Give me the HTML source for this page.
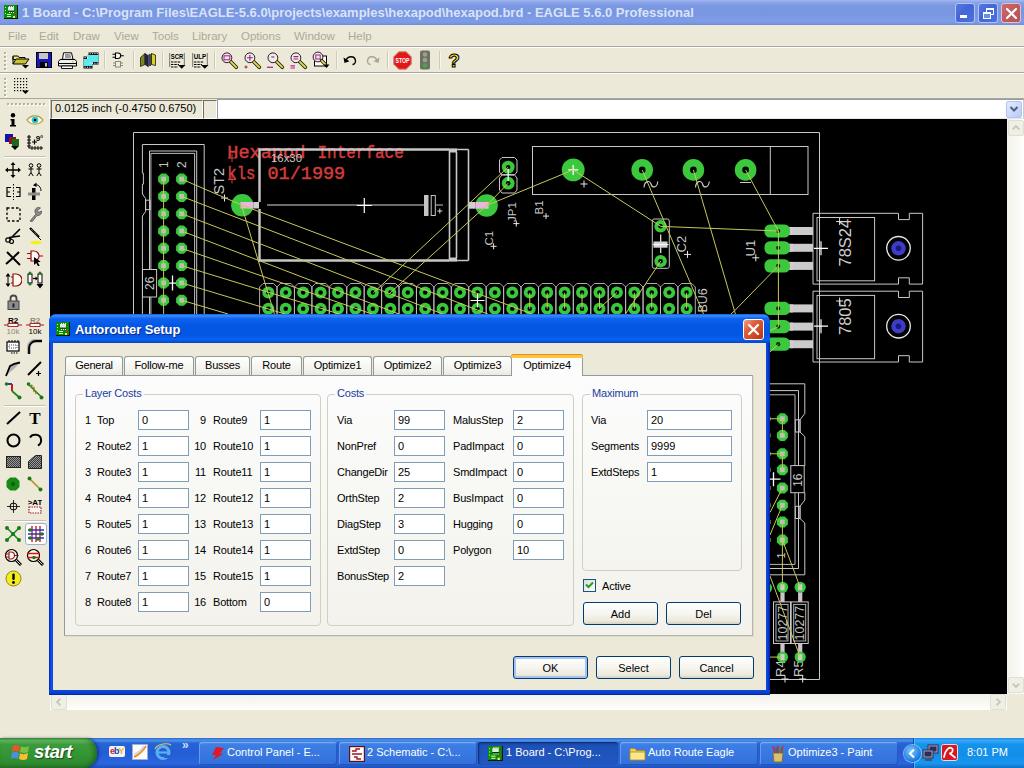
<!DOCTYPE html>
<html><head><meta charset="utf-8">
<style>
*{box-sizing:border-box;margin:0;padding:0}
html,body{width:1024px;height:768px;overflow:hidden;background:#ece9d8;font-family:"Liberation Sans",sans-serif;font-size:11px;color:#000}
.abs{position:absolute}
#titlebar{position:absolute;left:0;top:0;width:1024px;height:25px;background:linear-gradient(#a3b8f0 0,#8aa4e8 10%,#7b98e2 22%,#7896e1 55%,#7f9de7 82%,#7a98e4 92%,#6d8cda 100%)}
#titlebar .t{position:absolute;left:22px;top:5px;font-weight:bold;font-size:13px;color:#d9e3f8;white-space:nowrap;letter-spacing:0}
#menubar{position:absolute;left:0;top:25px;width:1024px;height:21px;background:#ece9d8}
#menubar span{position:absolute;top:5px;color:#aca899;font-size:11.5px}
.hline{position:absolute;left:0;width:1024px;height:1px}
#canvas{position:absolute;left:50px;top:119px;width:957px;height:575px;background:#000;overflow:hidden}
#taskbar{position:absolute;left:0;top:738px;width:1024px;height:30px;background:linear-gradient(#3168d5 0,#4993e6 8%,#2663d6 18%,#245dd7 50%,#2a66dd 85%,#1d4fba 100%)}

#dlg{position:absolute;left:49px;top:314px;width:721px;height:381px;background:linear-gradient(90deg,#001aa8 0,#0a3ed8 1px,#1052ec 2.500px,#0c4ae2 4px,#0c4ae2 717px,#0a3fd0 719px,#001aa0 721px);border-radius:7px 7px 0 0;overflow:hidden}
#dlgtitle{position:absolute;left:0;top:0;width:721px;height:29px;background:linear-gradient(#0a5fe8 0,#3a8cf7 6%,#0e62ee 16%,#0457e4 40%,#0356e3 70%,#0a60f0 88%,#0447c8 100%);border-radius:7px 7px 0 0}
#dlgtitle .t{position:absolute;left:26px;top:8px;font-weight:bold;font-size:13px;letter-spacing:-0.1px;color:#fff;white-space:nowrap;text-shadow:1px 1px 0 #0a2a8a}
#dlgbody{position:absolute;left:4px;top:29px;width:713px;height:347px;background:#ece9d8}#dlgbot{position:absolute;left:0;top:376px;width:721px;height:5px;background:linear-gradient(#0b4ad8 0,#0a3fd0 3px,#00229c 5px)}
#pane{position:absolute;left:64px;top:375px;width:689px;height:261px;background:linear-gradient(#fcfcfd 0,#f8f8f5 40%,#f3f2ec 100%);border:1px solid;border-color:#919b9c #b4b6aa #b4b6aa #919b9c;box-shadow:1px 1px 0 #dcdace}
.tab{position:absolute;top:356px;height:19px;background:linear-gradient(#fefefd 0,#f6f5f0 60%,#ebeae1 100%);border:1px solid #919b9c;border-bottom:none;border-radius:3px 3px 0 0;text-align:center;font-size:11px;line-height:17px;white-space:nowrap;letter-spacing:-0.2px}
.tab.sel{top:354px;height:22px;background:#fcfcfd;border-top:none;line-height:23px}
.tab.sel:before{content:"";position:absolute;left:-1px;right:-1px;top:0;height:3px;background:#ffc73c;border-top:1px solid #e68b2c;border-radius:3px 3px 0 0}
.grp{position:absolute;border:1px solid #d0d0bf;border-radius:4px}
.grp b{position:absolute;left:7px;top:-8px;background:#fbfbfb;padding:0 2px;font-weight:normal;color:#1a409c;font-size:11px;line-height:13px;white-space:nowrap;letter-spacing:-0.2px}
.in{position:absolute;height:20px;background:#fff;border:1px solid #7f9db9;font-size:11px;line-height:18px;padding-left:3px}
.lb{position:absolute;font-size:11px;line-height:13px;white-space:nowrap;letter-spacing:-0.2px}
.btn{position:absolute;width:75px;height:23px;border:1px solid #003c74;border-radius:3px;background:linear-gradient(#fff 0,#f6f5ef 50%,#ece9dd 85%,#d6d0c5 100%);text-align:center;font-size:11px;line-height:23px}
.btn.def{box-shadow:inset 0 0 0 2px #a9c3f1}.cb{position:absolute;top:3px;width:20px;height:20px;border:1px solid #b4c4f2;border-radius:3px;background:linear-gradient(135deg,#5878e0 0,#4266d8 45%,#4a72e0 100%)}
.cb.x{background:linear-gradient(135deg,#cc6a70 0,#c25a5e 45%,#b85454 100%);border-color:#e0c0d0}

#dlgclose{position:absolute;left:694px;top:5px;width:21px;height:21px;border:1px solid #fff;border-radius:3px;background:linear-gradient(135deg,#f0a088 0,#e0603c 35%,#c8401c 80%,#b83818 100%)}

</style></head><body>
<div id="titlebar"><svg class="abs" style="left:4px;top:5px" width="14" height="14" viewBox="0 0 14 14"><rect x="0" y="0" width="14" height="14" fill="#031a03"/><rect x="0" y="0" width="13" height="13" fill="#0c8c0c"/><rect x="4" y="2" width="6" height="4" fill="#e4e8e0"/><rect x="4" y="5.600" width="6.500" height="0.900" fill="#052805"/><rect x="5" y="1" width="1" height="1" fill="#d8ffd8"/><rect x="7" y="1" width="1" height="1" fill="#d8ffd8"/><rect x="9" y="1" width="1" height="1" fill="#d8ffd8"/><rect x="5" y="7" width="1" height="1" fill="#d8ffd8"/><rect x="7" y="7" width="1" height="1" fill="#d8ffd8"/><rect x="9" y="7" width="1" height="1" fill="#d8ffd8"/><rect x="1" y="2" width="1" height="1" fill="#b8ffb8"/><rect x="1" y="5" width="1" height="1" fill="#b8ffb8"/><rect x="1" y="8" width="1" height="1" fill="#b8ffb8"/><rect x="3" y="9" width="4" height="1" fill="#c8ff9c"/><rect x="3" y="11" width="4" height="1" fill="#c8ff9c"/><circle cx="11" cy="9" r="1" fill="#d02818"/><rect x="9" y="11" width="2" height="2" fill="#f0f078"/></svg><div class="t">1 Board - C:\Program Files\EAGLE-5.6.0\projects\examples\hexapod\hexapod.brd - EAGLE 5.6.0 Professional</div>
<div class="cb" style="left:955px"><div style="position:absolute;left:4px;top:11px;width:7px;height:3px;background:#fff"></div></div>
<div class="cb" style="left:978px"><svg width="19" height="19" viewBox="0 0 19 19" style="position:absolute;left:0;top:0"><rect x="7.5" y="4.5" width="7" height="6" fill="none" stroke="#fff" stroke-width="1"/><rect x="7" y="4" width="8" height="2" fill="#fff"/><rect x="4.5" y="8.5" width="7" height="6" fill="#6c8fe0" stroke="#fff" stroke-width="1"/><rect x="4" y="8" width="8" height="2" fill="#fff"/></svg></div>
<div class="cb x" style="left:1001px"><svg width="19" height="19" viewBox="0 0 19 19" style="position:absolute;left:0;top:0"><path d="M5 5 L14 14 M14 5 L5 14" stroke="#fff" stroke-width="2.2" stroke-linecap="round"/></svg></div>
</div>
<div id="menubar">
<span style="left:8px">File</span>
<span style="left:39px">Edit</span>
<span style="left:73px">Draw</span>
<span style="left:114px">View</span>
<span style="left:152px">Tools</span>
<span style="left:192px">Library</span>
<span style="left:241px">Options</span>
<span style="left:294px">Window</span>
<span style="left:348px">Help</span>
</div>
<div class="hline" style="top:46px;background:#aca899"></div>
<div class="hline" style="top:47px;background:#fff"></div>
<div class="hline" style="top:72px;background:#aca899"></div>
<div class="hline" style="top:73px;background:#fff"></div>
<div class="hline" style="top:98px;background:#aca899"></div>
<div class="abs" style="left:4px;top:52px;width:2px;height:2px;background:#b5b2a0;box-shadow:1px 1px 0 #fff"></div><div class="abs" style="left:4px;top:56px;width:2px;height:2px;background:#b5b2a0;box-shadow:1px 1px 0 #fff"></div><div class="abs" style="left:4px;top:60px;width:2px;height:2px;background:#b5b2a0;box-shadow:1px 1px 0 #fff"></div><div class="abs" style="left:4px;top:64px;width:2px;height:2px;background:#b5b2a0;box-shadow:1px 1px 0 #fff"></div><div class="abs" style="left:4px;top:68px;width:2px;height:2px;background:#b5b2a0;box-shadow:1px 1px 0 #fff"></div>
<div class="abs" style="left:4px;top:78px;width:2px;height:2px;background:#b5b2a0;box-shadow:1px 1px 0 #fff"></div><div class="abs" style="left:4px;top:82px;width:2px;height:2px;background:#b5b2a0;box-shadow:1px 1px 0 #fff"></div><div class="abs" style="left:4px;top:86px;width:2px;height:2px;background:#b5b2a0;box-shadow:1px 1px 0 #fff"></div><div class="abs" style="left:4px;top:90px;width:2px;height:2px;background:#b5b2a0;box-shadow:1px 1px 0 #fff"></div><div class="abs" style="left:4px;top:94px;width:2px;height:2px;background:#b5b2a0;box-shadow:1px 1px 0 #fff"></div>
<div class="abs" style="left:104px;top:51px;width:1px;height:18px;background:#cdcaba;box-shadow:1px 0 0 #f8f7f0"></div>
<div class="abs" style="left:133px;top:51px;width:1px;height:18px;background:#cdcaba;box-shadow:1px 0 0 #f8f7f0"></div>
<div class="abs" style="left:162px;top:51px;width:1px;height:18px;background:#cdcaba;box-shadow:1px 0 0 #f8f7f0"></div>
<div class="abs" style="left:214px;top:51px;width:1px;height:18px;background:#cdcaba;box-shadow:1px 0 0 #f8f7f0"></div>
<div class="abs" style="left:336px;top:51px;width:1px;height:18px;background:#cdcaba;box-shadow:1px 0 0 #f8f7f0"></div>
<div class="abs" style="left:387px;top:51px;width:1px;height:18px;background:#cdcaba;box-shadow:1px 0 0 #f8f7f0"></div>
<div class="abs" style="left:439px;top:51px;width:1px;height:18px;background:#cdcaba;box-shadow:1px 0 0 #f8f7f0"></div>
<svg class="abs" style="left:12px;top:51px" width="18" height="18" viewBox="0 0 18 18"><path d="M1 5 h5 l1 1.5 h6 v2 h-12z" fill="#f5e46a" stroke="#000" stroke-width="1"/><path d="M1 13 l3 -5 h13 l-3.5 5z" fill="#c9c235" stroke="#000" stroke-width="1"/><path d="M1 5.5 v7.5" stroke="#000"/><path d="M10 14 h7 l-3.5 3.5z" fill="#000"/></svg>
<svg class="abs" style="left:35.5px;top:52px" width="16" height="16" viewBox="0 0 16 16"><rect x="0.5" y="0.5" width="15" height="15" fill="#1818b8" stroke="#000"/><rect x="3" y="1" width="9" height="6" fill="#c6c6c6"/><rect x="4" y="10" width="8" height="5.5" fill="#000"/><rect x="9" y="11" width="2" height="3.5" fill="#c6c6c6"/></svg>
<svg class="abs" style="left:57.5px;top:51.5px" width="19" height="17" viewBox="0 0 19 17"><path d="M5.500 0.800 h8 l1.500 6.500 h-10.500z" fill="#ffffff" stroke="#000" stroke-width="1"/><path d="M7 3 h5.500 M7 5 h6" stroke="#000" stroke-width="0.800"/><path d="M2 7.500 h15 l1.500 2 v4.500 h-18 v-4.500z" fill="#f0f0f0" stroke="#000"/><path d="M1 11.500 h17" stroke="#000"/><path d="M3.500 14 h11 v2.500 h-11z" fill="#fff" stroke="#000" stroke-width="0.900"/><rect x="14" y="9" width="2" height="1.200" fill="#e0d020"/></svg>
<svg class="abs" style="left:82.5px;top:51.5px" width="16" height="17" viewBox="0 0 16 17"><rect x="5.500" y="0.500" width="10" height="12" fill="#000"/><rect x="5.500" y="3" width="10" height="7" fill="#5ce8ec"/><rect x="0.500" y="4.500" width="9" height="12" fill="#000"/><rect x="0.500" y="7" width="9" height="7" fill="#5ce8ec"/><rect x="4" y="3" width="6" height="9" fill="#5ce8ec"/><path d="M6.500 1.700 h8.500 M6.500 11.200 h8.500 M1.500 5.700 h3.500 M1.500 15.200 h7.500" stroke="#fff" stroke-width="1" stroke-dasharray="1.200 1.200"/></svg>
<svg class="abs" style="left:112px;top:51.5px" width="12" height="16" viewBox="0 0 12 16"><path d="M3.500 1 v5.500 h2.500 a2.750 2.750 0 0 0 0 -5.500z" fill="#f8f8f0" stroke="#000" stroke-width="1.100"/><path d="M0.500 2.300 h3 M0.500 5.200 h3 M8.800 3.750 h3" stroke="#000" stroke-width="1.100"/><rect x="3.500" y="9.500" width="5" height="5.500" fill="#eeece0" stroke="#8a887c" stroke-width="1"/><path d="M1 11 h2.500 M1 13.500 h2.500 M8.500 11 h2.500 M8.500 13.500 h2.500" stroke="#8a887c" stroke-width="1"/></svg>
<svg class="abs" style="left:140px;top:51.5px" width="16" height="15" viewBox="0 0 16 15"><path d="M0.500 5.500 L5 1.500 V12.500 L0.500 14.500z" fill="#84841c" stroke="#1a1a1a" stroke-width="0.800"/><path d="M5 1.500 L8 3.500 V14.500 L5 12.500z" fill="#26264a" stroke="#1a1a1a" stroke-width="0.600"/><path d="M8 3.500 L10 2 V13 L8 14.500z" fill="#6464b8" stroke="#1a1a1a" stroke-width="0.600"/><path d="M10 3.500 L11.500 1.500 V12.500 L10 14z" fill="#6c6c10" stroke="#1a1a1a" stroke-width="0.600"/><path d="M11.500 1.500 L15.500 3 V13.500 L11.500 12.500z" fill="#d8d224" stroke="#1a1a1a" stroke-width="0.800"/></svg>
<svg class="abs" style="left:168.5px;top:52.5px" width="17" height="16" viewBox="0 0 17 16"><path d="M0.700 0.500 v14 M15.300 0.500 v11" stroke="#000" stroke-width="1" stroke-dasharray="1 1"/><text x="8" y="6.300" font-size="8" font-weight="bold" text-anchor="middle" font-family="Liberation Sans" fill="#000" textLength="12.500" lengthAdjust="spacingAndGlyphs">SCR</text><path d="M2 9 h10 M2 11.500 h8 M2 14 h7" stroke="#000" stroke-width="1.100" stroke-dasharray="2.500 0.800"/><path d="M9 12 h7.500 l-3.750 3.800z" fill="#000"/></svg>
<svg class="abs" style="left:191.5px;top:52.5px" width="17" height="16" viewBox="0 0 17 16"><path d="M0.700 0.500 v14 M15.300 0.500 v11" stroke="#000" stroke-width="1" stroke-dasharray="1 1"/><text x="8" y="6.300" font-size="8" font-weight="bold" text-anchor="middle" font-family="Liberation Sans" fill="#000" textLength="12.500" lengthAdjust="spacingAndGlyphs">ULP</text><path d="M2 9 h10 M2 11.500 h8 M2 14 h7" stroke="#000" stroke-width="1.100" stroke-dasharray="2.500 0.800"/><path d="M9 12 h7.500 l-3.750 3.800z" fill="#000"/></svg>
<svg class="abs" style="left:219.5px;top:51.5px" width="19" height="19" viewBox="0 0 19 19"><path d="M10.300 9.300 L16.300 15.300" stroke="#2a2410" stroke-width="3.600" stroke-linecap="round"/><path d="M10.600 9.600 L16.200 15.200" stroke="#e2de50" stroke-width="1.900" stroke-linecap="round"/><circle cx="6.900" cy="5.800" r="4.900" fill="#f2eee2" stroke="#2a1830" stroke-width="1"/><rect x="4" y="3.800" width="5.800" height="4" fill="#f4e4ec" stroke="#a01c84" stroke-width="1"/></svg>
<svg class="abs" style="left:242.5px;top:51.5px" width="19" height="19" viewBox="0 0 19 19"><path d="M10.300 9.300 L16.300 15.300" stroke="#2a2410" stroke-width="3.600" stroke-linecap="round"/><path d="M10.600 9.600 L16.200 15.200" stroke="#e2de50" stroke-width="1.900" stroke-linecap="round"/><circle cx="6.900" cy="5.800" r="4.900" fill="#f2eee2" stroke="#2a1830" stroke-width="1"/><path d="M4 5.800 h5.800 M6.900 2.900 v5.800" stroke="#a01c84" stroke-width="1.100"/><path d="M1.500 15 h3 M3 13.500 v3" stroke="#a01c44" stroke-width="1"/></svg>
<svg class="abs" style="left:265.5px;top:51.5px" width="19" height="19" viewBox="0 0 19 19"><path d="M10.300 9.300 L16.300 15.300" stroke="#2a2410" stroke-width="3.600" stroke-linecap="round"/><path d="M10.600 9.600 L16.200 15.200" stroke="#e2de50" stroke-width="1.900" stroke-linecap="round"/><circle cx="6.900" cy="5.800" r="4.900" fill="#f2eee2" stroke="#2a1830" stroke-width="1"/><path d="M5.300 5 h3" stroke="#a01c84" stroke-width="1.100"/><path d="M1 15.300 h6" stroke="#c01c94" stroke-width="1.300"/></svg>
<svg class="abs" style="left:288.5px;top:51.5px" width="19" height="19" viewBox="0 0 19 19"><path d="M10.300 9.300 L16.300 15.300" stroke="#2a2410" stroke-width="3.600" stroke-linecap="round"/><path d="M10.600 9.600 L16.200 15.200" stroke="#e2de50" stroke-width="1.900" stroke-linecap="round"/><circle cx="6.900" cy="5.800" r="4.900" fill="#f2eee2" stroke="#2a1830" stroke-width="1"/><path d="M4.500 4.600 h4.800 M4.500 7 h4.800" stroke="#a01c84" stroke-width="1.100"/><path d="M1.500 13.800 h4.500 M1.500 16 h4.500" stroke="#c01c94" stroke-width="1.200"/></svg>
<svg class="abs" style="left:312px;top:51px" width="18" height="18" viewBox="0 0 18 18"><rect x="2.500" y="5" width="12" height="10" fill="#fff" stroke="#000" stroke-width="1"/><circle cx="6" cy="6" r="4.900" fill="#f2eee2" stroke="#2a1830" stroke-width="1"/><rect x="3.800" y="4" width="4.400" height="4" fill="#f4e4ec" stroke="#a01c84" stroke-width="1"/><path d="M9.500 9.500 L13.500 13.500" stroke="#2a2410" stroke-width="3.400" stroke-linecap="round"/><path d="M9.800 9.800 L13.300 13.300" stroke="#e2de50" stroke-width="1.700" stroke-linecap="round"/><path d="M11.500 13.500 h6 l-3 3.500z" fill="#000"/></svg>
<svg class="abs" style="left:342px;top:54px" width="16" height="12" viewBox="0 0 16 12"><path d="M4 6.500 C 6 1.500, 13 1.500, 13.500 7 C 13.500 9, 12 10.500, 10.500 10.500" fill="none" stroke="#000" stroke-width="1.400"/><path d="M1.500 3.500 l1 5.500 l5 -1.800z" fill="#000"/></svg>
<svg class="abs" style="left:365px;top:54px" width="16" height="12" viewBox="0 0 16 12"><path d="M12 6.500 C 10 1.500, 3 1.500, 2.500 7 C 2.500 9, 4 10.500, 5.500 10.500" fill="none" stroke="#a8a698" stroke-width="1.400"/><path d="M14.500 3.500 l-1 5.500 l-5 -1.800z" fill="#a8a698"/></svg>
<svg class="abs" style="left:392.5px;top:50.5px" width="19" height="19" viewBox="0 0 19 19"><path d="M5.800 0.700 h7.400 l5.100 5.100 v7.400 l-5.100 5.100 h-7.400 l-5.100 -5.100 v-7.400z" fill="#e01818" stroke="#fff" stroke-width="0.800"/><path d="M5.800 0.700 h7.400 l5.100 5.100 v7.400 l-5.100 5.100 h-7.400 l-5.100 -5.100 v-7.400z" fill="none" stroke="#a01010" stroke-width="0.500"/><text x="9.500" y="12.300" font-size="7.500" font-weight="bold" text-anchor="middle" font-family="Liberation Sans" fill="#fff" textLength="14" lengthAdjust="spacingAndGlyphs">STOP</text></svg>
<svg class="abs" style="left:419px;top:50px" width="12" height="20" viewBox="0 0 12 20"><rect x="1" y="0.500" width="10" height="19" rx="2" fill="#5a5a52"/><circle cx="6" cy="4.500" r="2.300" fill="#8a9a84"/><circle cx="6" cy="10" r="2.300" fill="#8a9a84"/><circle cx="6" cy="15.500" r="2.300" fill="#2e9a38"/><path d="M1 1 h10 M1 3 h10 M1 5 h10 M1 7 h10 M1 9 h10 M1 11 h10 M1 13 h10 M1 15 h10 M1 17 h10 M1 19 h10" stroke="#cfd4c4" stroke-width="0.600" opacity="0.600"/></svg>
<svg class="abs" style="left:447px;top:51px" width="14" height="18" viewBox="0 0 14 18"><text x="7" y="15.500" font-size="19" font-weight="bold" text-anchor="middle" font-family="Liberation Sans" fill="#f4ec1c" stroke="#000" stroke-width="1">?</text></svg>
<svg class="abs" style="left:13.5px;top:78px" width="18" height="18" viewBox="0 0 18 18"><rect x="0" y="0" width="1.2" height="1.2" fill="#000"/><rect x="3" y="0" width="1.2" height="1.2" fill="#000"/><rect x="6" y="0" width="1.2" height="1.2" fill="#000"/><rect x="9" y="0" width="1.2" height="1.2" fill="#000"/><rect x="12" y="0" width="1.2" height="1.2" fill="#000"/><rect x="0" y="3" width="1.2" height="1.2" fill="#000"/><rect x="3" y="3" width="1.2" height="1.2" fill="#000"/><rect x="6" y="3" width="1.2" height="1.2" fill="#000"/><rect x="9" y="3" width="1.2" height="1.2" fill="#000"/><rect x="12" y="3" width="1.2" height="1.2" fill="#000"/><rect x="0" y="6" width="1.2" height="1.2" fill="#000"/><rect x="3" y="6" width="1.2" height="1.2" fill="#000"/><rect x="6" y="6" width="1.2" height="1.2" fill="#000"/><rect x="9" y="6" width="1.2" height="1.2" fill="#000"/><rect x="12" y="6" width="1.2" height="1.2" fill="#000"/><rect x="0" y="9" width="1.2" height="1.2" fill="#000"/><rect x="3" y="9" width="1.2" height="1.2" fill="#000"/><rect x="6" y="9" width="1.2" height="1.2" fill="#000"/><rect x="9" y="9" width="1.2" height="1.2" fill="#000"/><rect x="12" y="9" width="1.2" height="1.2" fill="#000"/><rect x="0" y="12" width="1.2" height="1.2" fill="#000"/><rect x="3" y="12" width="1.2" height="1.2" fill="#000"/><rect x="6" y="12" width="1.2" height="1.2" fill="#000"/><rect x="9" y="12" width="1.2" height="1.2" fill="#000"/><rect x="12" y="12" width="1.2" height="1.2" fill="#000"/><path d="M8 12.500 h7 l-3.500 3.500z" fill="#000"/></svg><div class="abs" style="left:0;top:99px;width:50px;height:611px;background:#ece9d8"></div>
<div class="abs" style="left:49px;top:99px;width:1px;height:20px;background:#fff"></div><div class="abs" style="left:50px;top:99px;width:1px;height:20px;background:#c0bdac"></div>
<div class="abs" style="left:7px;top:103px;width:2px;height:2px;background:#b5b2a0;box-shadow:1px 1px 0 #fff"></div><div class="abs" style="left:11px;top:103px;width:2px;height:2px;background:#b5b2a0;box-shadow:1px 1px 0 #fff"></div><div class="abs" style="left:15px;top:103px;width:2px;height:2px;background:#b5b2a0;box-shadow:1px 1px 0 #fff"></div><div class="abs" style="left:19px;top:103px;width:2px;height:2px;background:#b5b2a0;box-shadow:1px 1px 0 #fff"></div><div class="abs" style="left:23px;top:103px;width:2px;height:2px;background:#b5b2a0;box-shadow:1px 1px 0 #fff"></div><div class="abs" style="left:27px;top:103px;width:2px;height:2px;background:#b5b2a0;box-shadow:1px 1px 0 #fff"></div><div class="abs" style="left:31px;top:103px;width:2px;height:2px;background:#b5b2a0;box-shadow:1px 1px 0 #fff"></div><div class="abs" style="left:35px;top:103px;width:2px;height:2px;background:#b5b2a0;box-shadow:1px 1px 0 #fff"></div><div class="abs" style="left:39px;top:103px;width:2px;height:2px;background:#b5b2a0;box-shadow:1px 1px 0 #fff"></div><div class="abs" style="left:43px;top:103px;width:2px;height:2px;background:#b5b2a0;box-shadow:1px 1px 0 #fff"></div>
<div class="abs" style="left:4px;top:156px;width:42px;height:1px;background:#c5c2b2;box-shadow:0 1px 0 #fff"></div>
<div class="abs" style="left:4px;top:405px;width:42px;height:1px;background:#c5c2b2;box-shadow:0 1px 0 #fff"></div>
<div class="abs" style="left:4px;top:520px;width:42px;height:1px;background:#c5c2b2;box-shadow:0 1px 0 #fff"></div>
<svg class="abs" style="left:9px;top:113px" width="8" height="14" viewBox="0 0 8 14"><circle cx="4" cy="2.200" r="2.200" fill="#000"/><path d="M1.500 6 h4 v6 h1.500 v1.500 h-6 v-1.500 h1.500 v-4.500 h-1z" fill="#000"/></svg>
<svg class="abs" style="left:26px;top:114px" width="18" height="12" viewBox="0 0 18 12"><path d="M1 6 C 5 0.500, 13 0.500, 17 6 C 13 11.500, 5 11.500, 1 6z" fill="#fdfcf0" stroke="#b09a30" stroke-width="1.200"/><circle cx="9" cy="6" r="3.300" fill="#28c8d8"/><circle cx="9" cy="6" r="1.300" fill="#000"/></svg>
<svg class="abs" style="left:5px;top:134px" width="16" height="16" viewBox="0 0 16 16"><rect x="0" y="0" width="8" height="8" fill="#1414a8"/><rect x="4" y="3" width="7" height="7" fill="#8a1a1a"/><rect x="7" y="5" width="7" height="7" fill="#1a6a1a"/><path d="M6 12 h8 l-4 4z" fill="#000"/></svg>
<svg class="abs" style="left:26.5px;top:134px" width="17" height="16" viewBox="0 0 17 16"><path d="M2 1 v13 h14" fill="none" stroke="#000" stroke-width="1.200"/><path d="M0 3 h4 M0 6 h4 M0 9 h4 M0 12 h4 M5 12 v4 M8 12 v4 M11 12 v4 M14 12 v4" stroke="#000" stroke-width="0.900"/><path d="M5 8 h5 M7.500 5.500 v5" stroke="#000" stroke-width="1.200"/><text x="12.500" y="7" font-size="8" font-weight="bold" font-family="Liberation Sans" text-anchor="middle">9°</text></svg>
<svg class="abs" style="left:5px;top:162px" width="16" height="16" viewBox="0 0 16 16"><path d="M8 1 v14 M1 8 h14" stroke="#000" stroke-width="1.300"/><path d="M8 0 l-2.500 3 h5z M8 16 l-2.500 -3 h5z M0 8 l3 -2.500 v5z M16 8 l-3 -2.500 v5z" fill="#000"/></svg>
<svg class="abs" style="left:27px;top:163px" width="16" height="14" viewBox="0 0 16 14"><circle cx="4" cy="2.500" r="1.800" fill="none" stroke="#000"/><path d="M4 4.500 v5 M1.5 6 h5 M4 9.500 l-2.200 3.500 M4 9.500 l2.200 3.500" stroke="#000" fill="none"/><circle cx="12" cy="2.500" r="1.800" fill="none" stroke="#000"/><path d="M12 4.500 v5 M9.5 6 h5 M12 9.500 l-2.200 3.500 M12 9.500 l2.200 3.500" stroke="#000" fill="none"/></svg>
<svg class="abs" style="left:5.5px;top:184px" width="15" height="16" viewBox="0 0 15 16"><path d="M7.500 0 v16" stroke="#000" stroke-dasharray="1.500 1.500"/><path d="M5 3.500 h-4 v9 h4 M1 8 h3" fill="none" stroke="#000" stroke-width="1.200"/><path d="M10 3.500 h4 v9 h-4 M14 8 h-3" fill="none" stroke="#000" stroke-width="1.200"/></svg>
<svg class="abs" style="left:27px;top:182px" width="16" height="18" viewBox="0 0 16 18"><rect x="5" y="6" width="3.500" height="12" fill="#000"/><rect x="1" y="10.500" width="12" height="3" fill="#8c8c8c"/><path d="M8 3 C 11 2, 14 5, 14 9" fill="none" stroke="#000" stroke-width="1"/><path d="M6 3.300 l3.500 -2.800 v4.500z" fill="#000"/></svg>
<svg class="abs" style="left:5.5px;top:206.5px" width="15" height="15" viewBox="0 0 15 15"><rect x="1" y="1" width="13" height="13" fill="none" stroke="#000" stroke-width="1.300" stroke-dasharray="2.500 2"/></svg>
<svg class="abs" style="left:28px;top:206px" width="14" height="16" viewBox="0 0 14 16"><path d="M2 15 L8 8 C 5 4, 9 0, 12.500 2 L9.500 4.500 L10.500 6.500 L13.500 5 C 14 8.500, 11 10, 9 9.500 L4 15.800z" fill="#8c8c8c" stroke="#444" stroke-width="0.700"/></svg>
<svg class="abs" style="left:5px;top:228px" width="16" height="16" viewBox="0 0 16 16"><path d="M15 1 L5 11 M15 8 L4 9.500" stroke="#000" stroke-width="1.600"/><circle cx="3" cy="12" r="2.200" fill="none" stroke="#000" stroke-width="1.200"/><circle cx="6.500" cy="13.500" r="2" fill="none" stroke="#000" stroke-width="1.200"/></svg>
<svg class="abs" style="left:28px;top:227px" width="14" height="18" viewBox="0 0 14 18"><path d="M2 1 L11 10" stroke="#000" stroke-width="2.200"/><path d="M3 2 L10 9" stroke="#b0b0b0" stroke-width="0.800" stroke-dasharray="1 1"/><path d="M10 10 l3 3" stroke="#000" stroke-width="1"/><ellipse cx="8" cy="15.500" rx="6" ry="1.800" fill="#f4f020"/></svg>
<svg class="abs" style="left:5px;top:250.5px" width="16" height="15" viewBox="0 0 16 15"><path d="M2 1 C 6 5, 10 9, 15 14 M14 1 C 10 5, 6 9, 1 13" stroke="#000" stroke-width="2" fill="none"/></svg>
<svg class="abs" style="left:27px;top:250px" width="16" height="16" viewBox="0 0 16 16"><path d="M4 1 v10 h3 a5 5 0 0 0 0 -10z" fill="#fdf8f0" stroke="#901010" stroke-width="1.200"/><path d="M0 3.500 h4 M0 8.500 h4 M12 6 h4" stroke="#901010" stroke-width="1.200"/><path d="M7 7 v8 l2.200 -2 l2 3.500 l1.500 -0.800 l-2 -3.500 l3 -0.500z" fill="#000"/></svg>
<svg class="abs" style="left:4.5px;top:273px" width="17" height="14" viewBox="0 0 17 14"><path d="M3 1 v12" stroke="#000" stroke-width="1"/><path d="M3 0 l-2.500 3.500 h5z M3 14 l-2.500 -3.500 h5z" fill="#000"/><path d="M8 1 v12 h3 a6 6 0 0 0 0 -12z" fill="#fdf8f0" stroke="#901010" stroke-width="1.200"/><path d="M6 4 h2 M6 10 h2" stroke="#901010"/></svg>
<svg class="abs" style="left:27px;top:271px" width="16" height="18" viewBox="0 0 16 18"><rect x="1" y="3" width="4" height="9" fill="#fff" stroke="#000"/><circle cx="3" cy="2" r="1.500" fill="#1a7a1a"/><circle cx="3" cy="13" r="1.500" fill="#1a7a1a"/><path d="M6 7.500 h3.500" stroke="#000" stroke-width="1.200"/><path d="M8.500 5.500 l2.500 2 l-2.500 2z" fill="#000"/><rect x="11" y="3" width="4" height="9" fill="#fff" stroke="#000"/><circle cx="13" cy="2" r="1.500" fill="#1a7a1a"/><path d="M9.500 13 h7 l-3.500 4.500z" fill="#000"/></svg>
<svg class="abs" style="left:6.5px;top:294px" width="13" height="16" viewBox="0 0 13 16"><path d="M3.500 8 v-3.500 a3 3 0 0 1 6 0 v3.500" fill="none" stroke="#444" stroke-width="1.800"/><rect x="1" y="7" width="11" height="8.500" fill="#8c8c8c" stroke="#444"/><rect x="5.500" y="9.500" width="2" height="4" fill="#222"/></svg>
<svg class="abs" style="left:4px;top:316px" width="18" height="18" viewBox="0 0 18 18"><text x="9" y="6.500" font-size="8" font-weight="bold" font-family="Liberation Sans" text-anchor="middle" fill="#000">R2</text><path d="M0 9 h18" stroke="#a01818" stroke-width="1"/><rect x="4" y="7.500" width="10" height="3" fill="#fdf4f0" stroke="#a01818" stroke-width="0.900"/><text x="9" y="17.500" font-size="8" font-family="Liberation Sans" text-anchor="middle" fill="#8a887c">10k</text></svg>
<svg class="abs" style="left:26px;top:316px" width="18" height="18" viewBox="0 0 18 18"><text x="9" y="6.500" font-size="8" font-weight="bold" font-family="Liberation Sans" text-anchor="middle" fill="#8a887c">R2</text><path d="M0 9 h18" stroke="#a01818" stroke-width="1"/><rect x="4" y="7.500" width="10" height="3" fill="#fdf4f0" stroke="#a01818" stroke-width="0.900"/><text x="9" y="17.500" font-size="8" font-family="Liberation Sans" text-anchor="middle" fill="#000">10k</text></svg>
<svg class="abs" style="left:5px;top:339px" width="16" height="16" viewBox="0 0 16 16"><rect x="2" y="3" width="12" height="9" fill="#fff" stroke="#000" stroke-width="1.200"/><path d="M4 1 v2 M7 1 v2 M10 1 v2 M13 1 v2" stroke="#000"/><rect x="4" y="6" width="8" height="3" fill="none" stroke="#000" stroke-width="0.700" stroke-dasharray="1 1"/><path d="M6 14 h7" stroke="#000" stroke-dasharray="1.500 1"/></svg>
<svg class="abs" style="left:27px;top:339px" width="16" height="16" viewBox="0 0 16 16"><path d="M2 15 v-7 a6 6 0 0 1 6 -6 h7" fill="none" stroke="#b0b0b0" stroke-width="4"/><path d="M2 15 v-6 a7 7 0 0 1 7 -7 h6" fill="none" stroke="#000" stroke-width="1.800"/></svg>
<svg class="abs" style="left:5px;top:361px" width="16" height="16" viewBox="0 0 16 16"><path d="M1 15 L5 5 C 8 3, 12 2, 15 1.500 L 10 7 L 4 12z" fill="#b0b0b0"/><path d="M1 15 L5 5 C 8 3, 12 2, 15 1.500" fill="none" stroke="#000" stroke-width="1.800"/></svg>
<svg class="abs" style="left:27px;top:361px" width="16" height="16" viewBox="0 0 16 16"><path d="M1 14 L14 1" stroke="#000" stroke-width="2"/><path d="M9 12.500 h5 M11.500 10 v5" stroke="#000" stroke-width="1.200"/></svg>
<svg class="abs" style="left:4px;top:382px" width="18" height="18" viewBox="0 0 18 18"><path d="M2 2 h6" stroke="#1a3ad0" stroke-width="2"/><path d="M8 2 v7" stroke="#d01818" stroke-width="2"/><path d="M8 9 l8 7" stroke="#1a8a1a" stroke-width="1.800"/><circle cx="2.500" cy="2" r="1.800" fill="#1a7a1a"/><circle cx="15.500" cy="15.500" r="2" fill="#1a7a1a"/></svg>
<svg class="abs" style="left:26px;top:382px" width="18" height="18" viewBox="0 0 18 18"><path d="M2 2 L16 15.500" stroke="#1a8a1a" stroke-width="1.600"/><path d="M5 3 l3 3 v3 l3 3" fill="none" stroke="#a07818" stroke-width="1.800" stroke-dasharray="2 1"/><circle cx="2.500" cy="2" r="1.800" fill="#1a7a1a"/><circle cx="15.500" cy="15.500" r="2" fill="#1a7a1a"/></svg>
<svg class="abs" style="left:5.5px;top:411px" width="15" height="14" viewBox="0 0 15 14"><path d="M1 13 L14 1" stroke="#000" stroke-width="2"/></svg>
<svg class="abs" style="left:29px;top:411px" width="12" height="14" viewBox="0 0 12 14"><text x="6" y="13" font-size="17" font-weight="bold" font-family="Liberation Serif" text-anchor="middle" fill="#000">T</text></svg>
<svg class="abs" style="left:5.5px;top:432.5px" width="15" height="15" viewBox="0 0 15 15"><circle cx="7.500" cy="7.500" r="6" fill="none" stroke="#000" stroke-width="2"/></svg>
<svg class="abs" style="left:27.5px;top:433px" width="15" height="14" viewBox="0 0 15 14"><path d="M2 4.500 C 4 0.500, 12 0.500, 13 6 C 13.500 9, 12 11.500, 10 12.500" fill="none" stroke="#000" stroke-width="2"/></svg>
<svg width="0" height="0" style="position:absolute"><defs><pattern id="chk" width="2" height="2" patternUnits="userSpaceOnUse"><rect width="2" height="2" fill="#9a9a9a"/><rect width="1" height="1" fill="#3a3a3a"/><rect x="1" y="1" width="1" height="1" fill="#3a3a3a"/></pattern></defs></svg>
<svg class="abs" style="left:5.5px;top:456px" width="15" height="12" viewBox="0 0 15 12"><rect x="0.500" y="0.500" width="14" height="11" fill="url(#chk)" stroke="#222"/></svg>
<svg class="abs" style="left:28px;top:455px" width="14" height="14" viewBox="0 0 14 14"><path d="M0.500 13.500 v-7 l7 -6 h6 v13z" fill="url(#chk)" stroke="#222"/></svg>
<svg class="abs" style="left:6px;top:477px" width="14" height="14" viewBox="0 0 14 14"><path d="M4.100 0.500 h5.800 l3.600 3.600 v5.800 l-3.600 3.600 h-5.800 l-3.600 -3.600 v-5.800z" fill="#168a16"/><circle cx="7" cy="7" r="2" fill="#0a5a0a"/></svg>
<svg class="abs" style="left:27px;top:476px" width="16" height="16" viewBox="0 0 16 16"><path d="M2 2 L14 14" stroke="#a89018" stroke-width="1.500"/><circle cx="2.500" cy="2.500" r="2" fill="#1a7a1a"/><circle cx="13.500" cy="13.500" r="2" fill="#1a7a1a"/></svg>
<svg class="abs" style="left:6.5px;top:499.5px" width="13" height="13" viewBox="0 0 13 13"><circle cx="6.500" cy="6.500" r="3.500" fill="none" stroke="#000"/><path d="M6.500 0 v13 M0 6.500 h13" stroke="#000" stroke-width="0.800"/></svg>
<svg class="abs" style="left:28px;top:498px" width="14" height="16" viewBox="0 0 14 16"><text x="7" y="7" font-size="8" font-weight="bold" font-family="Liberation Sans" text-anchor="middle" fill="#000">&gt;AT</text><rect x="1" y="9" width="12" height="6" fill="#fdf4f0" stroke="#a01818" stroke-width="1.200" stroke-dasharray="1.500 1"/></svg>
<svg class="abs" style="left:4px;top:525px" width="18" height="18" viewBox="0 0 18 18"><path d="M3 3 L15 15 M15 3 L3 15" stroke="#1a8a1a" stroke-width="1.500"/><circle cx="3" cy="3" r="2" fill="#1a7a1a"/><circle cx="15" cy="3" r="2" fill="#1a7a1a"/><circle cx="3" cy="15" r="2" fill="#1a7a1a"/><circle cx="15" cy="15" r="2" fill="#1a7a1a"/><circle cx="9" cy="9" r="2" fill="#1a7a1a"/></svg>
<div class="abs" style="left:25px;top:523px;width:22px;height:22px;background:#fff;border:1px solid #9cb0d8;border-radius:3px"></div>
<svg class="abs" style="left:27px;top:525px" width="18" height="18" viewBox="0 0 18 18"><path d="M5 1 v16 M9 1 v16 M13 1 v16" stroke="#d01818" stroke-width="1.400"/><path d="M1 5 h16 M1 9 h16 M1 13 h16" stroke="#1a3ad0" stroke-width="1.400"/><circle cx="3" cy="5" r="1.700" fill="#1a7a1a"/><circle cx="3" cy="13" r="1.700" fill="#1a7a1a"/><circle cx="15" cy="9" r="1.700" fill="#1a7a1a"/><circle cx="11" cy="14" r="1.700" fill="#1a7a1a"/></svg>
<svg class="abs" style="left:4px;top:548px" width="18" height="18" viewBox="0 0 18 18"><path d="M12 12 L17 17" stroke="#000" stroke-width="3"/><path d="M12 12 L16.500 16.500" stroke="#d8d8d0" stroke-width="1"/><circle cx="7.500" cy="7.500" r="6" fill="#fdf8f0" stroke="#000" stroke-width="1.200"/><path d="M5 4 v7 h2 a3.500 3.500 0 0 0 0 -7z" fill="none" stroke="#901010" stroke-width="1.100"/><path d="M1 6 h4 M1 9 h4 M10.500 7.500 h4" stroke="#901010"/></svg>
<svg class="abs" style="left:26px;top:548px" width="18" height="18" viewBox="0 0 18 18"><path d="M12 12 L17 17" stroke="#000" stroke-width="3"/><path d="M12 12 L16.500 16.500" stroke="#d8d8d0" stroke-width="1"/><circle cx="7.500" cy="7.500" r="6" fill="#fdf8f0" stroke="#000" stroke-width="1.200"/><path d="M1 5.500 h13 M1 9.500 h13" stroke="#d01818" stroke-width="1.400"/><circle cx="8" cy="9.500" r="1.800" fill="#1a7a1a"/></svg>
<svg class="abs" style="left:4.5px;top:569.5px" width="17" height="17" viewBox="0 0 17 17"><circle cx="8.500" cy="8.500" r="7.500" fill="#f4ec1c" stroke="#8a8420" stroke-width="1"/><rect x="7.300" y="3.500" width="2.400" height="6.500" rx="1" fill="#000"/><circle cx="8.500" cy="12.500" r="1.400" fill="#000"/></svg>
<div class="abs" style="left:51px;top:100px;width:152px;height:19px;border:1px solid;border-color:#716f64 #fff #fff #716f64;background:#ece9d8;font-size:11px;line-height:15px;padding-left:3px;white-space:nowrap">0.0125 inch (-0.4750 0.6750)</div>
<div class="abs" style="left:203px;top:100px;width:14px;height:19px;border:1px solid;border-color:#716f64 #fff #fff #716f64;background:#ece9d8"></div>
<div class="abs" style="left:217px;top:99px;width:807px;height:20px;border:1px solid;border-color:#8e9cae #c8ccd4 #e8e8e0 #8e9cae;background:#fff"></div>
<div class="abs" style="left:1006px;top:101px;width:16px;height:17px;border:1px solid #b4c4f4;border-radius:2px;background:linear-gradient(135deg,#e2ebfd,#b8caf6)"><svg width="14" height="14" viewBox="0 0 14 14" style="position:absolute;left:0;top:0"><path d="M3.500 5 L7 8.500 L10.500 5" stroke="#4d6185" stroke-width="2" fill="none"/></svg></div>
<div class="abs" style="left:1007px;top:119px;width:17px;height:575px;background:linear-gradient(90deg,#f2f1ea,#fefefb)"></div>
<div class="abs" style="left:50px;top:694px;width:957px;height:16px;background:linear-gradient(#f2f1ea,#fefefb)"></div>
<div class="abs" style="left:1008px;top:120px;width:16px;height:16px;border:1px solid #e0dfd4;border-radius:2px;background:#f0efe6"><svg width="14" height="14" viewBox="0 0 15 15" style="position:absolute;left:0;top:0"><path d="M4 9 L7.500 5.500 L11 9" stroke="#c9c7ba" stroke-width="2" fill="none"/></svg></div>
<div class="abs" style="left:1008px;top:677px;width:16px;height:16px;border:1px solid #e0dfd4;border-radius:2px;background:#f0efe6"><svg width="14" height="14" viewBox="0 0 15 15" style="position:absolute;left:0;top:0"><path d="M4 6 L7.500 9.500 L11 6" stroke="#c9c7ba" stroke-width="2" fill="none"/></svg></div>
<div class="abs" style="left:51px;top:694px;width:16px;height:16px;border:1px solid #e0dfd4;border-radius:2px;background:#f0efe6"><svg width="14" height="14" viewBox="0 0 15 15" style="position:absolute;left:0;top:0"><path d="M9 4 L5.500 7.500 L9 11" stroke="#c9c7ba" stroke-width="2" fill="none"/></svg></div>
<div class="abs" style="left:990px;top:694px;width:16px;height:16px;border:1px solid #e0dfd4;border-radius:2px;background:#f0efe6"><svg width="14" height="14" viewBox="0 0 15 15" style="position:absolute;left:0;top:0"><path d="M6 4 L9.500 7.500 L6 11" stroke="#c9c7ba" stroke-width="2" fill="none"/></svg></div>
<div class="abs" style="left:1007px;top:694px;width:17px;height:16px;background:#ece9d8"></div><div id="canvas"><svg width="957" height="575" viewBox="50 119 957 575" style="position:absolute;left:0;top:0" shape-rendering="auto" font-family="Liberation Sans, sans-serif">
<text x="227.3" y="157.6" font-family="Liberation Mono, monospace" font-size="17.700" fill="#d23c3c" stroke="#d23c3c" stroke-width="0.450" textLength="78" lengthAdjust="spacingAndGlyphs">Hexapod</text>
<text x="317.5" y="157.6" font-family="Liberation Mono, monospace" font-size="17.700" fill="#d23c3c" stroke="#d23c3c" stroke-width="0.450" textLength="86.3" lengthAdjust="spacingAndGlyphs">Interface</text>
<text x="227.3" y="179.2" font-family="Liberation Mono, monospace" font-size="17.700" fill="#d23c3c" stroke="#d23c3c" stroke-width="0.450" textLength="28" lengthAdjust="spacingAndGlyphs">kls</text>
<text x="267.5" y="179.2" font-family="Liberation Mono, monospace" font-size="17.700" fill="#d23c3c" stroke="#d23c3c" stroke-width="0.450" textLength="77.7" lengthAdjust="spacingAndGlyphs">01/1999</text>
<path d="M228 158 h8 M232 154 v8" stroke="#d23c3c" stroke-width="1" fill="none"/>
<path d="M228 179.5 h8 M232 175.5 v8" stroke="#d23c3c" stroke-width="1" fill="none"/>
<path d="M133.5 694 V132.5 H819.5 V679.5 H760" stroke="#c8c8c8" stroke-width="1" fill="none"/>
<path d="M142.400 314 V216 L145.600 211.600 V198.500 L142.400 194 V184.200 H143.400 V173.200 H142.400 V144.500 H204.200 V314" stroke="#c8c8c8" stroke-width="1" fill="none"/>
<rect x="145.6" y="200.2" width="4.6" height="9.4" stroke="#c8c8c8" stroke-width="1" fill="none"/>
<path d="M149.500 314 V151 H196.700 V314" stroke="#c8c8c8" stroke-width="1" fill="none"/>
<path d="M150.900 314 V153.400 H194.600 V314" stroke="#bcbcbc" stroke-width="1" fill="none"/>
<text transform="translate(167.92 168) rotate(-90)" font-size="12" fill="#c8c8c8" text-anchor="start">1</text>
<text transform="translate(185.92 168) rotate(-90)" font-size="12" fill="#c8c8c8" text-anchor="start">2</text>
<rect x="142.5" y="269.5" width="14.1" height="27.5" stroke="#c8c8c8" stroke-width="1" fill="#000"/>
<text transform="translate(154.12 290) rotate(-90)" font-size="12" fill="#c8c8c8" text-anchor="start">26</text>
<path d="M165 283.1 h15 M172.5 275.6 v15" stroke="#fff" stroke-width="1.3" fill="none"/>
<text transform="translate(224.02 194.5) rotate(-90)" font-size="14.5" fill="#c8c8c8" text-anchor="start">ST2</text>
<path d="M221 198 h7 M224.5 194.5 v7" stroke="#e8e8e8" stroke-width="1" fill="none"/>
<path d="M259.500 202 V149.500 H449.500 M259.500 209 V260.500 H449.500" stroke=" #c8c8c8" stroke-width="2.4" fill="none"/>
<path d="M449.500 149.500 V260.500 M456.500 152 V258 M468.500 149.500 V260.500 M449.500 149.500 H468.500 M449.500 260.500 H468.500" stroke="#c8c8c8" stroke-width="1.6" fill="none"/>
<rect x="449.5" y="148.5" width="7.5" height="4" stroke="none" stroke-width="0" fill="#c8c8c8"/>
<rect x="449.5" y="257.5" width="7.5" height="4" stroke="none" stroke-width="0" fill="#c8c8c8"/>
<text x="271" y="161.500" font-size="10" fill="#c8c8c8" textLength="31" lengthAdjust="spacingAndGlyphs">16x30</text>
<path d="M267 205 L424 205" stroke="#d8d8d8" stroke-width="1.2" fill="none"/>
<path d="M356.8 205.5 h15 M364.3 198 v15" stroke="#fff" stroke-width="1.2" fill="none"/>
<rect x="424" y="195" width="4.5" height="21" stroke="none" stroke-width="0" fill="#c4c4c4"/>
<rect x="431.2" y="195.5" width="4.1" height="20" stroke="#c4c4c4" stroke-width="1" fill="none"/>
<path d="M435.5 205 L443 205" stroke="#c4c4c4" stroke-width="1" fill="none"/>
<path d="M437.3 211 h5 M439.8 208.5 v5" stroke="#d8d8d8" stroke-width="1" fill="none"/>
<path d="M502 157.500 H514.500 L517 160 V172 L514.500 175 L517 178 V190 L514.500 193 H502 L499.500 190 V178 L502 175 L499.500 172 V160 Z" stroke="#c8c8c8" stroke-width="1" fill="none"/>
<text transform="translate(516.44 222) rotate(-90)" font-size="11.5" fill="#c8c8c8" text-anchor="start">JP1</text>
<path d="M513.3 223.6 h6 M516.3 220.6 v6" stroke="#e8e8e8" stroke-width="1" fill="none"/>
<text transform="translate(492.54 245.5) rotate(-90)" font-size="11.5" fill="#c8c8c8" text-anchor="start">C1</text>
<path d="M490.6 246.3 h6 M493.6 243.3 v6" stroke="#e8e8e8" stroke-width="1" fill="none"/>
<text transform="translate(543.34 214.5) rotate(-90)" font-size="11.5" fill="#c8c8c8" text-anchor="start">B1</text>
<path d="M543 216.1 h6 M546 213.1 v6" stroke="#e8e8e8" stroke-width="1" fill="none"/>
<rect x="532.5" y="146.5" width="275.5" height="48" stroke="#c8c8c8" stroke-width="1" fill="none"/>
<path d="M770.3 146.5 L770.3 194.5" stroke="#c8c8c8" stroke-width="1" fill="none"/>
<rect x="652.300" y="219" width="17" height="49.300" rx="2" fill="none" stroke="#c8c8c8" stroke-width="1"/>
<text transform="translate(686.18 252.5) rotate(-90)" font-size="13" fill="#c8c8c8" text-anchor="start">C2</text>
<path d="M684 254.4 h7 M687.5 250.9 v7" stroke="#e8e8e8" stroke-width="1" fill="none"/>
<text transform="translate(754.88 256.5) rotate(-90)" font-size="13" fill="#c8c8c8" text-anchor="start">U1</text>
<path d="M752.3 257.8 h7 M755.8 254.3 v7" stroke="#e8e8e8" stroke-width="1" fill="none"/>
<text transform="translate(707 312.5) rotate(-90)" font-size="12.5" fill="#c8c8c8" text-anchor="start">BU6</text>
<path d="M813 213.3 H898.500 V219.60000000000002 H909.300 V213.3 H922.600 V284.1 H909.300 V277.8 H898.500 V284.1 H813 Z" stroke="#c8c8c8" stroke-width="1" fill="none"/>
<rect x="817" y="217.5" width="57.6" height="63.3" stroke="#c8c8c8" stroke-width="1" fill="none"/>
<text transform="translate(851.14 266.5) rotate(-90)" font-size="16.5" fill="#cdcdcd" text-anchor="start">78S24</text>
<circle cx="898.500" cy="248.3" r="11.800" fill="#000" stroke="#e8e8e8" stroke-width="1.300"/><circle cx="898.500" cy="248.3" r="7.200" fill="#3c3cc8"/><circle cx="898.500" cy="248.3" r="2.800" fill="#1a1a78"/>
<path d="M814 248.3 h14 M821 241.3 v14" stroke="#fff" stroke-width="1.2" fill="none"/>
<path d="M836.1 221.5 h7 M839.6 218 v7" stroke="#e0e0e0" stroke-width="1" fill="none"/>
<path d="M813 291.2 H898.500 V297.5 H909.300 V291.2 H922.600 V362.0 H909.300 V355.7 H898.500 V362.0 H813 Z" stroke="#c8c8c8" stroke-width="1" fill="none"/>
<rect x="817" y="295.4" width="57.6" height="63.3" stroke="#c8c8c8" stroke-width="1" fill="none"/>
<text transform="translate(851.14 335) rotate(-90)" font-size="16.5" fill="#cdcdcd" text-anchor="start">7805</text>
<circle cx="898.500" cy="326.2" r="11.800" fill="#000" stroke="#e8e8e8" stroke-width="1.300"/><circle cx="898.500" cy="326.2" r="7.200" fill="#3c3cc8"/><circle cx="898.500" cy="326.2" r="2.800" fill="#1a1a78"/>
<path d="M814 326.2 h14 M821 319.2 v14" stroke="#fff" stroke-width="1.2" fill="none"/>
<path d="M836.1 301 h7 M839.6 297.5 v7" stroke="#e0e0e0" stroke-width="1" fill="none"/>
<path d="M770 383.800 H804.800 V413.5 L800 419.8 V432.0 L804.800 436.5 V466 M804.800 492.500 V500 L800 506.3 V518.5 L804.800 523 V574.800 H770" stroke="#c8c8c8" stroke-width="1" fill="none"/>
<rect x="795.4" y="419.8" width="4.6" height="12.2" stroke="#c8c8c8" stroke-width="1" fill="none"/>
<rect x="795.4" y="506.3" width="4.6" height="12.2" stroke="#c8c8c8" stroke-width="1" fill="none"/>
<path d="M770 390.600 H798.500 V466 M798.500 492.500 V568.500 H770" stroke="#c8c8c8" stroke-width="1" fill="none"/>
<path d="M770 394.800 H795 V466 M795 492.500 V564.400 H770" stroke="#b8b8b8" stroke-width="1" fill="none"/>
<rect x="790.8" y="465.6" width="13.4" height="27.1" stroke="#c8c8c8" stroke-width="1" fill="#000"/>
<text transform="translate(801.82 486.8) rotate(-90)" font-size="12" fill="#c8c8c8" text-anchor="start">16</text>
<path d="M766.5 479.2 h14 M773.5 472.2 v14" stroke="#fff" stroke-width="1.3" fill="none"/>
<text transform="translate(785.46 558.5) rotate(-90)" font-size="11" fill="#c8c8c8" text-anchor="start">1</text>
<rect x="773.5" y="601.9" width="17" height="41.6" stroke="#c8c8c8" stroke-width="1" fill="none"/>
<rect x="776" y="604.4" width="12" height="36.6" stroke="#b4b4b4" stroke-width="1" fill="none"/>
<rect x="780.4" y="587.3" width="4.2" height="14.6" stroke="none" stroke-width="0" fill="#d0c4cc"/>
<rect x="780.4" y="643.5" width="4.2" height="13.6" stroke="none" stroke-width="0" fill="#d0c4cc"/>
<rect x="791.2" y="601.9" width="17" height="41.6" stroke="#c8c8c8" stroke-width="1" fill="none"/>
<rect x="793.7" y="604.4" width="12" height="36.6" stroke="#b4b4b4" stroke-width="1" fill="none"/>
<rect x="798.1" y="587.3" width="4.2" height="14.6" stroke="none" stroke-width="0" fill="#d0c4cc"/>
<rect x="798.1" y="643.5" width="4.2" height="13.6" stroke="none" stroke-width="0" fill="#d0c4cc"/>
<text transform="translate(786.5 640.5) rotate(-90)" font-size="12.5" fill="#c4c4c4" text-anchor="start">10277</text>
<text transform="translate(804.2 640.5) rotate(-90)" font-size="12.5" fill="#c4c4c4" text-anchor="start">10277</text>
<text transform="translate(784.98 677) rotate(-90)" font-size="13" fill="#c8c8c8" text-anchor="start">R4</text>
<text transform="translate(802.68 677) rotate(-90)" font-size="13" fill="#c8c8c8" text-anchor="start">R5</text>
<path d="M781.5 679 h7 M785 675.5 v7" stroke="#e8e8e8" stroke-width="1" fill="none"/>
<path d="M799.2 679 h7 M802.7 675.5 v7" stroke="#e8e8e8" stroke-width="1" fill="none"/>
<path d="M259.6 314 V287 L263.1 283.500 H273.5 L277.0 287 V314 M277.0 314 V287 L280.5 283.500 H290.9 L294.4 287 V314 M294.5 314 V287 L298.0 283.500 H308.4 L311.9 287 V314 M311.9 314 V287 L315.4 283.500 H325.8 L329.3 287 V314 M329.3 314 V287 L332.8 283.500 H343.2 L346.7 287 V314 M346.8 314 V287 L350.3 283.500 H360.7 L364.2 287 V314 M364.2 314 V287 L367.7 283.500 H378.1 L381.6 287 V314 M381.6 314 V287 L385.1 283.500 H395.5 L399.0 287 V314 M399.0 314 V287 L402.5 283.500 H412.9 L416.4 287 V314 M416.5 314 V287 L420.0 283.500 H430.4 L433.9 287 V314 M433.9 314 V287 L437.4 283.500 H447.8 L451.3 287 V314 M451.3 314 V287 L454.8 283.500 H465.2 L468.7 287 V314 M468.8 314 V287 L472.3 283.500 H482.7 L486.2 287 V314 M486.2 314 V287 L489.7 283.500 H500.1 L503.6 287 V314 M503.6 314 V287 L507.1 283.500 H517.5 L521.0 287 V314 M521.0 314 V287 L524.5 283.500 H535.0 L538.5 287 V314 M538.5 314 V287 L542.0 283.500 H552.4 L555.9 287 V314 M555.9 314 V287 L559.4 283.500 H569.8 L573.3 287 V314 M573.3 314 V287 L576.8 283.500 H587.2 L590.7 287 V314 M590.8 314 V287 L594.3 283.500 H604.7 L608.2 287 V314 M608.2 314 V287 L611.7 283.500 H622.1 L625.6 287 V314 M625.6 314 V287 L629.1 283.500 H639.5 L643.0 287 V314 M643.1 314 V287 L646.6 283.500 H657.0 L660.5 287 V314 M660.5 314 V287 L664.0 283.500 H674.4 L677.9 287 V314 M677.9 314 V287 L681.4 283.500 H691.8 L695.3 287 V314 " stroke="#c0c0c0" stroke-width="0.9" fill="none"/>
<polygon points="169.1,181.4 165.9,184.6 161.3,184.6 158.1,181.4 158.1,176.8 161.3,173.6 165.9,173.6 169.1,176.8" fill="#3cc83c"/><rect x="161.2" y="176.7" width="4.8" height="4.8" fill="#bdbdbd"/>
<polygon points="187.1,181.4 183.9,184.6 179.3,184.6 176.1,181.4 176.1,176.8 179.3,173.6 183.9,173.6 187.1,176.8" fill="#3cc83c"/><rect x="179.2" y="176.7" width="4.8" height="4.8" fill="#bdbdbd"/>
<polygon points="169.1,198.7 165.9,201.9 161.3,201.9 158.1,198.7 158.1,194.1 161.3,190.9 165.9,190.9 169.1,194.1" fill="#3cc83c"/><rect x="161.2" y="194" width="4.8" height="4.8" fill="#bdbdbd"/>
<polygon points="187.1,198.7 183.9,201.9 179.3,201.9 176.1,198.7 176.1,194.1 179.3,190.9 183.9,190.9 187.1,194.1" fill="#3cc83c"/><rect x="179.2" y="194" width="4.8" height="4.8" fill="#bdbdbd"/>
<polygon points="169.1,216.0 165.9,219.2 161.3,219.2 158.1,216.0 158.1,211.4 161.3,208.2 165.9,208.2 169.1,211.4" fill="#3cc83c"/><rect x="161.2" y="211.3" width="4.8" height="4.8" fill="#bdbdbd"/>
<polygon points="187.1,216.0 183.9,219.2 179.3,219.2 176.1,216.0 176.1,211.4 179.3,208.2 183.9,208.2 187.1,211.4" fill="#3cc83c"/><rect x="179.2" y="211.3" width="4.8" height="4.8" fill="#bdbdbd"/>
<polygon points="169.1,233.3 165.9,236.5 161.3,236.5 158.1,233.3 158.1,228.7 161.3,225.5 165.9,225.5 169.1,228.7" fill="#3cc83c"/><rect x="161.2" y="228.6" width="4.8" height="4.8" fill="#bdbdbd"/>
<polygon points="187.1,233.3 183.9,236.5 179.3,236.5 176.1,233.3 176.1,228.7 179.3,225.5 183.9,225.5 187.1,228.7" fill="#3cc83c"/><rect x="179.2" y="228.6" width="4.8" height="4.8" fill="#bdbdbd"/>
<polygon points="169.1,250.6 165.9,253.8 161.3,253.8 158.1,250.6 158.1,246.0 161.3,242.8 165.9,242.8 169.1,246.0" fill="#3cc83c"/><rect x="161.2" y="245.9" width="4.8" height="4.8" fill="#bdbdbd"/>
<polygon points="187.1,250.6 183.9,253.8 179.3,253.8 176.1,250.6 176.1,246.0 179.3,242.8 183.9,242.8 187.1,246.0" fill="#3cc83c"/><rect x="179.2" y="245.9" width="4.8" height="4.8" fill="#bdbdbd"/>
<polygon points="169.1,267.9 165.9,271.1 161.3,271.1 158.1,267.9 158.1,263.3 161.3,260.1 165.9,260.1 169.1,263.3" fill="#3cc83c"/><rect x="161.2" y="263.2" width="4.8" height="4.8" fill="#bdbdbd"/>
<polygon points="187.1,267.9 183.9,271.1 179.3,271.1 176.1,267.9 176.1,263.3 179.3,260.1 183.9,260.1 187.1,263.3" fill="#3cc83c"/><rect x="179.2" y="263.2" width="4.8" height="4.8" fill="#bdbdbd"/>
<polygon points="169.1,285.2 165.9,288.4 161.3,288.4 158.1,285.2 158.1,280.6 161.3,277.4 165.9,277.4 169.1,280.6" fill="#3cc83c"/><rect x="161.2" y="280.5" width="4.8" height="4.8" fill="#bdbdbd"/>
<polygon points="187.1,285.2 183.9,288.4 179.3,288.4 176.1,285.2 176.1,280.6 179.3,277.4 183.9,277.4 187.1,280.6" fill="#3cc83c"/><rect x="179.2" y="280.5" width="4.8" height="4.8" fill="#bdbdbd"/>
<polygon points="169.1,302.5 165.9,305.7 161.3,305.7 158.1,302.5 158.1,297.9 161.3,294.7 165.9,294.7 169.1,297.9" fill="#3cc83c"/><rect x="161.2" y="297.8" width="4.8" height="4.8" fill="#bdbdbd"/>
<polygon points="187.1,302.5 183.9,305.7 179.3,305.7 176.1,302.5 176.1,297.9 179.3,294.7 183.9,294.7 187.1,297.9" fill="#3cc83c"/><rect x="179.2" y="297.8" width="4.8" height="4.8" fill="#bdbdbd"/>
<circle cx="268.3" cy="292.5" r="6" fill="#3cc83c"/><circle cx="268.3" cy="292.5" r="2.25" fill="#000"/>
<circle cx="268.3" cy="308.7" r="6" fill="#3cc83c"/><circle cx="268.3" cy="308.7" r="2.25" fill="#000"/>
<circle cx="285.73" cy="292.5" r="6" fill="#3cc83c"/><circle cx="285.73" cy="292.5" r="2.25" fill="#000"/>
<circle cx="285.73" cy="308.7" r="6" fill="#3cc83c"/><circle cx="285.73" cy="308.7" r="2.25" fill="#000"/>
<circle cx="303.16" cy="292.5" r="6" fill="#3cc83c"/><circle cx="303.16" cy="292.5" r="2.25" fill="#000"/>
<circle cx="303.16" cy="308.7" r="6" fill="#3cc83c"/><circle cx="303.16" cy="308.7" r="2.25" fill="#000"/>
<circle cx="320.59" cy="292.5" r="6" fill="#3cc83c"/><circle cx="320.59" cy="292.5" r="2.25" fill="#000"/>
<circle cx="320.59" cy="308.7" r="6" fill="#3cc83c"/><circle cx="320.59" cy="308.7" r="2.25" fill="#000"/>
<circle cx="338.02" cy="292.5" r="6" fill="#3cc83c"/><circle cx="338.02" cy="292.5" r="2.25" fill="#000"/>
<circle cx="338.02" cy="308.7" r="6" fill="#3cc83c"/><circle cx="338.02" cy="308.7" r="2.25" fill="#000"/>
<circle cx="355.45" cy="292.5" r="6" fill="#3cc83c"/><circle cx="355.45" cy="292.5" r="2.25" fill="#000"/>
<circle cx="355.45" cy="308.7" r="6" fill="#3cc83c"/><circle cx="355.45" cy="308.7" r="2.25" fill="#000"/>
<circle cx="372.88" cy="292.5" r="6" fill="#3cc83c"/><circle cx="372.88" cy="292.5" r="2.25" fill="#000"/>
<circle cx="372.88" cy="308.7" r="6" fill="#3cc83c"/><circle cx="372.88" cy="308.7" r="2.25" fill="#000"/>
<circle cx="390.31" cy="292.5" r="6" fill="#3cc83c"/><circle cx="390.31" cy="292.5" r="2.25" fill="#000"/>
<circle cx="390.31" cy="308.7" r="6" fill="#3cc83c"/><circle cx="390.31" cy="308.7" r="2.25" fill="#000"/>
<circle cx="407.74" cy="292.5" r="6" fill="#3cc83c"/><circle cx="407.74" cy="292.5" r="2.25" fill="#000"/>
<circle cx="407.74" cy="308.7" r="6" fill="#3cc83c"/><circle cx="407.74" cy="308.7" r="2.25" fill="#000"/>
<circle cx="425.17" cy="292.5" r="6" fill="#3cc83c"/><circle cx="425.17" cy="292.5" r="2.25" fill="#000"/>
<circle cx="425.17" cy="308.7" r="6" fill="#3cc83c"/><circle cx="425.17" cy="308.7" r="2.25" fill="#000"/>
<circle cx="442.6" cy="292.5" r="6" fill="#3cc83c"/><circle cx="442.6" cy="292.5" r="2.25" fill="#000"/>
<circle cx="442.6" cy="308.7" r="6" fill="#3cc83c"/><circle cx="442.6" cy="308.7" r="2.25" fill="#000"/>
<circle cx="460.03" cy="292.5" r="6" fill="#3cc83c"/><circle cx="460.03" cy="292.5" r="2.25" fill="#000"/>
<circle cx="460.03" cy="308.7" r="6" fill="#3cc83c"/><circle cx="460.03" cy="308.7" r="2.25" fill="#000"/>
<circle cx="477.46" cy="292.5" r="6" fill="#3cc83c"/><circle cx="477.46" cy="292.5" r="2.25" fill="#000"/>
<circle cx="477.46" cy="308.7" r="6" fill="#3cc83c"/><circle cx="477.46" cy="308.7" r="2.25" fill="#000"/>
<circle cx="494.89" cy="292.5" r="6" fill="#3cc83c"/><circle cx="494.89" cy="292.5" r="2.25" fill="#000"/>
<circle cx="494.89" cy="308.7" r="6" fill="#3cc83c"/><circle cx="494.89" cy="308.7" r="2.25" fill="#000"/>
<circle cx="512.32" cy="292.5" r="6" fill="#3cc83c"/><circle cx="512.32" cy="292.5" r="2.25" fill="#000"/>
<circle cx="512.32" cy="308.7" r="6" fill="#3cc83c"/><circle cx="512.32" cy="308.7" r="2.25" fill="#000"/>
<circle cx="529.75" cy="292.5" r="6" fill="#3cc83c"/><circle cx="529.75" cy="292.5" r="2.25" fill="#000"/>
<circle cx="529.75" cy="308.7" r="6" fill="#3cc83c"/><circle cx="529.75" cy="308.7" r="2.25" fill="#000"/>
<circle cx="547.18" cy="292.5" r="6" fill="#3cc83c"/><circle cx="547.18" cy="292.5" r="2.25" fill="#000"/>
<circle cx="547.18" cy="308.7" r="6" fill="#3cc83c"/><circle cx="547.18" cy="308.7" r="2.25" fill="#000"/>
<circle cx="564.61" cy="292.5" r="6" fill="#3cc83c"/><circle cx="564.61" cy="292.5" r="2.25" fill="#000"/>
<circle cx="564.61" cy="308.7" r="6" fill="#3cc83c"/><circle cx="564.61" cy="308.7" r="2.25" fill="#000"/>
<circle cx="582.04" cy="292.5" r="6" fill="#3cc83c"/><circle cx="582.04" cy="292.5" r="2.25" fill="#000"/>
<circle cx="582.04" cy="308.7" r="6" fill="#3cc83c"/><circle cx="582.04" cy="308.7" r="2.25" fill="#000"/>
<circle cx="599.47" cy="292.5" r="6" fill="#3cc83c"/><circle cx="599.47" cy="292.5" r="2.25" fill="#000"/>
<circle cx="599.47" cy="308.7" r="6" fill="#3cc83c"/><circle cx="599.47" cy="308.7" r="2.25" fill="#000"/>
<circle cx="616.9" cy="292.5" r="6" fill="#3cc83c"/><circle cx="616.9" cy="292.5" r="2.25" fill="#000"/>
<circle cx="616.9" cy="308.7" r="6" fill="#3cc83c"/><circle cx="616.9" cy="308.7" r="2.25" fill="#000"/>
<circle cx="634.33" cy="292.5" r="6" fill="#3cc83c"/><circle cx="634.33" cy="292.5" r="2.25" fill="#000"/>
<circle cx="634.33" cy="308.7" r="6" fill="#3cc83c"/><circle cx="634.33" cy="308.7" r="2.25" fill="#000"/>
<circle cx="651.76" cy="292.5" r="6" fill="#3cc83c"/><circle cx="651.76" cy="292.5" r="2.25" fill="#000"/>
<circle cx="651.76" cy="308.7" r="6" fill="#3cc83c"/><circle cx="651.76" cy="308.7" r="2.25" fill="#000"/>
<circle cx="669.19" cy="292.5" r="6" fill="#3cc83c"/><circle cx="669.19" cy="292.5" r="2.25" fill="#000"/>
<circle cx="669.19" cy="308.7" r="6" fill="#3cc83c"/><circle cx="669.19" cy="308.7" r="2.25" fill="#000"/>
<circle cx="686.62" cy="292.5" r="6" fill="#3cc83c"/><circle cx="686.62" cy="292.5" r="2.25" fill="#000"/>
<circle cx="686.62" cy="308.7" r="6" fill="#3cc83c"/><circle cx="686.62" cy="308.7" r="2.25" fill="#000"/>
<circle cx="242.3" cy="205.3" r="11.2" fill="#3cc83c"/>
<rect x="240.5" y="202" width="13" height="6.5" stroke="none" stroke-width="0" fill="#e8b6de"/>
<rect x="253.5" y="202" width="5.5" height="6.5" stroke="none" stroke-width="0" fill="#cfcfcf"/>
<circle cx="486.6" cy="205.5" r="11.2" fill="#3cc83c"/>
<rect x="468.8" y="202" width="6.6" height="6.7" stroke="none" stroke-width="0" fill="#cfcfcf"/>
<rect x="475.4" y="202" width="13.2" height="6.7" stroke="none" stroke-width="0" fill="#e8b6de"/>
<circle cx="508.2" cy="167.1" r="6.4" fill="#3cc83c"/><circle cx="508.2" cy="167.1" r="2.2" fill="#000"/>
<circle cx="508.2" cy="183.2" r="6.4" fill="#3cc83c"/><circle cx="508.2" cy="183.2" r="2.2" fill="#000"/>
<path d="M502.2 174.8 h12 M508.2 168.8 v12" stroke="#fff" stroke-width="1.2" fill="none"/>
<circle cx="573.2" cy="169.9" r="11.4" fill="#3cc83c"/>
<path d="M568.2 169.9 h10 M573.2 164.9 v10" stroke="#fff" stroke-width="1.3" fill="none"/>
<path d="M580.5 184 h7 M584 180.5 v7" stroke="#e8e8e8" stroke-width="1" fill="none"/>
<circle cx="642.2" cy="169.9" r="10.8" fill="#3cc83c"/>
<circle cx="642.2" cy="169.900" r="3.300" fill="#000"/>
<circle cx="693.4" cy="169.9" r="10.8" fill="#3cc83c"/>
<circle cx="693.4" cy="169.900" r="3.300" fill="#000"/>
<circle cx="745.6" cy="169.9" r="10.8" fill="#3cc83c"/>
<circle cx="745.6" cy="169.900" r="3.300" fill="#000"/>
<path d="M644 187.500 C 644.500 180.500, 650 180, 651 184 S 657 188.500, 657.800 181.500" stroke="#d0d0d0" stroke-width="1.1" fill="none"/>
<path d="M695.500 187.500 C 696 180.500, 701.500 180, 702.500 184 S 708.500 188.500, 709.300 181.500" stroke="#d0d0d0" stroke-width="1.1" fill="none"/>
<path d="M740 182.5 L751 182.5" stroke="#c8c8c8" stroke-width="1" fill="none"/>
<circle cx="660.6" cy="226.3" r="6.2" fill="#3cc83c"/><circle cx="660.6" cy="226.3" r="2.3" fill="#000"/>
<circle cx="660.6" cy="261.2" r="6.2" fill="#3cc83c"/><circle cx="660.6" cy="261.2" r="2.3" fill="#000"/>
<path d="M660.7 234.5 L660.7 253" stroke="#f0f0f0" stroke-width="1.2" fill="none"/>
<rect x="653.5" y="241.5" width="14" height="6.2" stroke="none" stroke-width="0" fill="#d4d4d4"/>
<path d="M653 244.6 L668.5 244.6" stroke="#fff" stroke-width="1" fill="none"/>
<rect x="790" y="227" width="23" height="8" stroke="none" stroke-width="0" fill="#cbcbcb"/>
<rect x="788" y="227" width="5" height="8" stroke="none" stroke-width="0" fill="#d8c8d8"/>
<rect x="764.500" y="224.4" width="25.500" height="13.200" rx="5.500" fill="#3cc83c"/>
<circle cx="778.200" cy="231" r="2.100" fill="#062806"/>
<rect x="790" y="243.8" width="23" height="8" stroke="none" stroke-width="0" fill="#cbcbcb"/>
<rect x="788" y="243.8" width="5" height="8" stroke="none" stroke-width="0" fill="#d8c8d8"/>
<rect x="764.500" y="241.2" width="25.500" height="13.200" rx="5.500" fill="#3cc83c"/>
<circle cx="778.200" cy="247.8" r="2.100" fill="#062806"/>
<rect x="790" y="261.9" width="23" height="8" stroke="none" stroke-width="0" fill="#cbcbcb"/>
<rect x="788" y="261.9" width="5" height="8" stroke="none" stroke-width="0" fill="#d8c8d8"/>
<rect x="764.500" y="259.3" width="25.500" height="13.200" rx="5.500" fill="#3cc83c"/>
<circle cx="778.200" cy="265.9" r="2.100" fill="#062806"/>
<rect x="790" y="304.4" width="23" height="8" stroke="none" stroke-width="0" fill="#cbcbcb"/>
<rect x="788" y="304.4" width="5" height="8" stroke="none" stroke-width="0" fill="#d8c8d8"/>
<rect x="764.500" y="301.8" width="25.500" height="13.200" rx="5.500" fill="#3cc83c"/>
<circle cx="778.200" cy="308.4" r="2.100" fill="#062806"/>
<rect x="790" y="322.6" width="23" height="8" stroke="none" stroke-width="0" fill="#cbcbcb"/>
<rect x="788" y="322.6" width="5" height="8" stroke="none" stroke-width="0" fill="#d8c8d8"/>
<rect x="764.500" y="320" width="25.500" height="13.200" rx="5.500" fill="#3cc83c"/>
<circle cx="778.200" cy="326.6" r="2.100" fill="#062806"/>
<rect x="790" y="340.2" width="23" height="8" stroke="none" stroke-width="0" fill="#cbcbcb"/>
<rect x="788" y="340.2" width="5" height="8" stroke="none" stroke-width="0" fill="#d8c8d8"/>
<rect x="764.500" y="337.6" width="25.500" height="13.200" rx="5.500" fill="#3cc83c"/>
<circle cx="778.200" cy="344.2" r="2.100" fill="#062806"/>
<polygon points="787.9,421.0 784.7,424.2 780.1,424.2 776.9,421.0 776.9,416.5 780.1,413.3 784.7,413.3 787.9,416.5" fill="#3cc83c"/><rect x="780" y="416.35" width="4.8" height="4.8" fill="#bdbdbd"/>
<polygon points="787.9,437.7 784.7,440.9 780.1,440.9 776.9,437.7 776.9,433.1 780.1,429.9 784.7,429.9 787.9,433.1" fill="#3cc83c"/><rect x="780" y="433" width="4.8" height="4.8" fill="#bdbdbd"/>
<polygon points="787.9,456.0 784.7,459.2 780.1,459.2 776.9,456.0 776.9,451.5 780.1,448.3 784.7,448.3 787.9,451.5" fill="#3cc83c"/><rect x="780" y="451.35" width="4.8" height="4.8" fill="#bdbdbd"/>
<polygon points="787.9,472.1 784.7,475.3 780.1,475.3 776.9,472.1 776.9,467.5 780.1,464.3 784.7,464.3 787.9,467.5" fill="#3cc83c"/><rect x="780" y="467.4" width="4.8" height="4.8" fill="#bdbdbd"/>
<polygon points="787.9,490.4 784.7,493.6 780.1,493.6 776.9,490.4 776.9,485.8 780.1,482.6 784.7,482.6 787.9,485.8" fill="#3cc83c"/><rect x="780" y="485.7" width="4.8" height="4.8" fill="#bdbdbd"/>
<polygon points="787.9,507.5 784.7,510.7 780.1,510.7 776.9,507.5 776.9,502.9 780.1,499.7 784.7,499.7 787.9,502.9" fill="#3cc83c"/><rect x="780" y="502.8" width="4.8" height="4.8" fill="#bdbdbd"/>
<polygon points="787.9,524.2 784.7,527.4 780.1,527.4 776.9,524.2 776.9,519.6 780.1,516.4 784.7,516.4 787.9,519.6" fill="#3cc83c"/><rect x="780" y="519.5" width="4.8" height="4.8" fill="#bdbdbd"/>
<polygon points="787.9,542.3 784.7,545.5 780.1,545.5 776.9,542.3 776.9,537.7 780.1,534.5 784.7,534.5 787.9,537.7" fill="#3cc83c"/><rect x="780" y="537.6" width="4.8" height="4.8" fill="#bdbdbd"/>
<circle cx="766.500" cy="588" r="5.600" fill="#3cc83c"/>
<circle cx="782.5" cy="587.3" r="5.600" fill="#3cc83c"/><rect x="780.4" y="584.3" width="4.200" height="6" fill="#d4c8d0"/>
<circle cx="782.5" cy="657.1" r="5.600" fill="#3cc83c"/><rect x="780.4" y="654.1" width="4.200" height="6" fill="#d4c8d0"/>
<circle cx="800.2" cy="587.3" r="5.600" fill="#3cc83c"/><rect x="798.1" y="584.3" width="4.200" height="6" fill="#d4c8d0"/>
<circle cx="800.2" cy="657.1" r="5.600" fill="#3cc83c"/><rect x="798.1" y="654.1" width="4.200" height="6" fill="#d4c8d0"/>
<path d="M470.5 300.5 h14 M477.5 293.5 v14" stroke="#fff" stroke-width="1.2" fill="none"/>
<path d="M163.6 179 L163.6 314" stroke="#c8c85a" stroke-width="1" fill="none"/>
<path d="M181.6 179.1 L242.3 205.3" stroke="#c8c85a" stroke-width="1" fill="none"/>
<path d="M242.3 205.3 L532 314" stroke="#c8c85a" stroke-width="1" fill="none"/>
<path d="M181.6 196.4 L487.9 314" stroke="#c8c85a" stroke-width="1" fill="none"/>
<path d="M181.6 213.7 L442.8 314" stroke="#c8c85a" stroke-width="1" fill="none"/>
<path d="M181.6 231 L398.9 314" stroke="#c8c85a" stroke-width="1" fill="none"/>
<path d="M181.6 248.3 L372 314" stroke="#c8c85a" stroke-width="1" fill="none"/>
<path d="M181.6 265.6 L339.3 314" stroke="#c8c85a" stroke-width="1" fill="none"/>
<path d="M181.6 282.9 L285 314" stroke="#c8c85a" stroke-width="1" fill="none"/>
<path d="M181.6 300.2 L228 314" stroke="#c8c85a" stroke-width="1" fill="none"/>
<path d="M241.5 205.3 L274.4 314" stroke="#c8c85a" stroke-width="1" fill="none"/>
<path d="M373.4 292.8 L508.2 167.1" stroke="#c8c85a" stroke-width="1" fill="none"/>
<path d="M390.2 292.8 L486.6 205.5" stroke="#c8c85a" stroke-width="1" fill="none"/>
<path d="M486.6 205.5 L508.2 183.2" stroke="#c8c85a" stroke-width="1" fill="none"/>
<path d="M486.6 205.5 L573.2 169.9" stroke="#c8c85a" stroke-width="1" fill="none"/>
<path d="M573.2 169.9 L660.9 226.4" stroke="#c8c85a" stroke-width="1" fill="none"/>
<path d="M642.2 169.9 L703.5 314" stroke="#c8c85a" stroke-width="1" fill="none"/>
<path d="M693.4 169.9 L735.4 314" stroke="#c8c85a" stroke-width="1" fill="none"/>
<path d="M745.6 169.9 L778.4 231" stroke="#c8c85a" stroke-width="1" fill="none"/>
<path d="M660.9 226.4 L778.4 231" stroke="#c8c85a" stroke-width="1" fill="none"/>
<path d="M778.4 231 L778.4 326.6" stroke="#c8c85a" stroke-width="1" fill="none"/>
<path d="M778.4 326.6 L770 330.5" stroke="#c8c85a" stroke-width="1" fill="none"/>
<path d="M778.4 344.2 L770 352" stroke="#c8c85a" stroke-width="1" fill="none"/>
<path d="M778.4 265.9 L734.3 311" stroke="#c8c85a" stroke-width="1" fill="none"/>
<path d="M734.3 311 L731 314" stroke="#c8c85a" stroke-width="1" fill="none"/>
<path d="M660.9 260.9 L625.4 314" stroke="#c8c85a" stroke-width="1" fill="none"/>
<path d="M617 292.5 L599 308.7" stroke="#c8c85a" stroke-width="1" fill="none"/>
<path d="M529.75 292.8 L529.75 308.7" stroke="#c8c85a" stroke-width="1" fill="none"/>
<path d="M547.18 292.8 L547.18 308.7" stroke="#c8c85a" stroke-width="1" fill="none"/>
<path d="M564.61 292.8 L564.61 308.7" stroke="#c8c85a" stroke-width="1" fill="none"/>
<path d="M582.04 292.8 L582.04 308.7" stroke="#c8c85a" stroke-width="1" fill="none"/>
<path d="M599.47 292.8 L599.47 308.7" stroke="#c8c85a" stroke-width="1" fill="none"/>
<path d="M634.33 292.8 L634.33 308.7" stroke="#c8c85a" stroke-width="1" fill="none"/>
<path d="M651.76 292.8 L651.76 308.7" stroke="#c8c85a" stroke-width="1" fill="none"/>
<path d="M686.62 292.8 L686.62 308.7" stroke="#c8c85a" stroke-width="1" fill="none"/>
<path d="M770 418.75 L782.4 418.75" stroke="#c8c85a" stroke-width="1" fill="none"/>
<path d="M770 453.75 L782.4 453.75" stroke="#c8c85a" stroke-width="1" fill="none"/>
<path d="M782.4 418.75 L782.4 435.4" stroke="#c8c85a" stroke-width="1" fill="none"/>
<path d="M782.4 453.75 L782.4 469.8" stroke="#c8c85a" stroke-width="1" fill="none"/>
<path d="M770 416.75 L770 420.75" stroke="#c8c85a" stroke-width="1" fill="none"/>
<path d="M770 433.4 L770 437.4" stroke="#c8c85a" stroke-width="1" fill="none"/>
<path d="M770 451.75 L770 455.75" stroke="#c8c85a" stroke-width="1" fill="none"/>
<path d="M770 467.8 L770 471.8" stroke="#c8c85a" stroke-width="1" fill="none"/>
<path d="M770 486.1 L770 490.1" stroke="#c8c85a" stroke-width="1" fill="none"/>
<path d="M770 503.2 L770 507.2" stroke="#c8c85a" stroke-width="1" fill="none"/>
<path d="M770 519.9 L770 523.9" stroke="#c8c85a" stroke-width="1" fill="none"/>
<path d="M770 538 L770 542" stroke="#c8c85a" stroke-width="1" fill="none"/>
<path d="M782.4 488.1 L770 512.5" stroke="#c8c85a" stroke-width="1" fill="none"/>
<path d="M782.4 505.2 L770 535" stroke="#c8c85a" stroke-width="1" fill="none"/>
<path d="M782.4 521.9 L782.4 587.3" stroke="#c8c85a" stroke-width="1" fill="none"/>
<path d="M782.4 540 L800.2 587.3" stroke="#c8c85a" stroke-width="1" fill="none"/>
<path d="M770 576 L800.2 657.1" stroke="#c8c85a" stroke-width="1" fill="none"/>
<path d="M770 657.1 L782.5 657.1" stroke="#c8c85a" stroke-width="1" fill="none"/>
</svg></div><div id="dlg"><div id="dlgtitle"><svg class="abs" style="left:7px;top:8px" width="14" height="14" viewBox="0 0 14 14"><rect x="0" y="0" width="14" height="14" fill="#031a03"/><rect x="0" y="0" width="13" height="13" fill="#0c8c0c"/><rect x="4" y="2" width="6" height="4" fill="#e4e8e0"/><rect x="4" y="5.600" width="6.500" height="0.900" fill="#052805"/><rect x="5" y="1" width="1" height="1" fill="#d8ffd8"/><rect x="7" y="1" width="1" height="1" fill="#d8ffd8"/><rect x="9" y="1" width="1" height="1" fill="#d8ffd8"/><rect x="5" y="7" width="1" height="1" fill="#d8ffd8"/><rect x="7" y="7" width="1" height="1" fill="#d8ffd8"/><rect x="9" y="7" width="1" height="1" fill="#d8ffd8"/><rect x="1" y="2" width="1" height="1" fill="#b8ffb8"/><rect x="1" y="5" width="1" height="1" fill="#b8ffb8"/><rect x="1" y="8" width="1" height="1" fill="#b8ffb8"/><rect x="3" y="9" width="4" height="1" fill="#c8ff9c"/><rect x="3" y="11" width="4" height="1" fill="#c8ff9c"/><circle cx="11" cy="9" r="1" fill="#d02818"/><rect x="9" y="11" width="2" height="2" fill="#f0f078"/></svg><div class="t">Autorouter Setup</div><div id="dlgclose"><svg width="19" height="19" viewBox="0 0 19 19" style="position:absolute;left:0;top:0"><path d="M5 5 L14 14 M14 5 L5 14" stroke="#fff" stroke-width="2.300" stroke-linecap="round"/></svg></div></div><div id="dlgbody"></div><div id="dlgbot"></div></div>
<div id="pane"></div>
<div class="tab" style="left:65px;width:58px">General</div>
<div class="tab" style="left:124px;width:70px">Follow-me</div>
<div class="tab" style="left:195px;width:55px">Busses</div>
<div class="tab" style="left:251px;width:51px">Route</div>
<div class="tab" style="left:303px;width:69px">Optimize1</div>
<div class="tab" style="left:373px;width:69px">Optimize2</div>
<div class="tab" style="left:443px;width:69px">Optimize3</div>
<div class="tab sel" style="left:511px;width:72px">Optimize4</div>
<div class="grp" style="left:75px;top:394px;width:246px;height:232px"><b>Layer Costs</b></div>
<div class="grp" style="left:327px;top:394px;width:247px;height:232px"><b>Costs</b></div>
<div class="grp" style="left:582px;top:394px;width:160px;height:177px"><b>Maximum</b></div>
<div class="lb" style="left:85px;top:414px">1</div><div class="lb" style="left:97px;top:414px">Top</div><div class="in" style="left:138px;top:410px;width:51px">0</div>
<div class="lb" style="left:186px;width:20px;text-align:right;top:414px">9</div><div class="lb" style="left:213px;top:414px">Route9</div><div class="in" style="left:260px;top:410px;width:51px">1</div>
<div class="lb" style="left:85px;top:440px">2</div><div class="lb" style="left:97px;top:440px">Route2</div><div class="in" style="left:138px;top:436px;width:51px">1</div>
<div class="lb" style="left:186px;width:20px;text-align:right;top:440px">10</div><div class="lb" style="left:213px;top:440px">Route10</div><div class="in" style="left:260px;top:436px;width:51px">1</div>
<div class="lb" style="left:85px;top:466px">3</div><div class="lb" style="left:97px;top:466px">Route3</div><div class="in" style="left:138px;top:462px;width:51px">1</div>
<div class="lb" style="left:186px;width:20px;text-align:right;top:466px">11</div><div class="lb" style="left:213px;top:466px">Route11</div><div class="in" style="left:260px;top:462px;width:51px">1</div>
<div class="lb" style="left:85px;top:492px">4</div><div class="lb" style="left:97px;top:492px">Route4</div><div class="in" style="left:138px;top:488px;width:51px">1</div>
<div class="lb" style="left:186px;width:20px;text-align:right;top:492px">12</div><div class="lb" style="left:213px;top:492px">Route12</div><div class="in" style="left:260px;top:488px;width:51px">1</div>
<div class="lb" style="left:85px;top:518px">5</div><div class="lb" style="left:97px;top:518px">Route5</div><div class="in" style="left:138px;top:514px;width:51px">1</div>
<div class="lb" style="left:186px;width:20px;text-align:right;top:518px">13</div><div class="lb" style="left:213px;top:518px">Route13</div><div class="in" style="left:260px;top:514px;width:51px">1</div>
<div class="lb" style="left:85px;top:544px">6</div><div class="lb" style="left:97px;top:544px">Route6</div><div class="in" style="left:138px;top:540px;width:51px">1</div>
<div class="lb" style="left:186px;width:20px;text-align:right;top:544px">14</div><div class="lb" style="left:213px;top:544px">Route14</div><div class="in" style="left:260px;top:540px;width:51px">1</div>
<div class="lb" style="left:85px;top:570px">7</div><div class="lb" style="left:97px;top:570px">Route7</div><div class="in" style="left:138px;top:566px;width:51px">1</div>
<div class="lb" style="left:186px;width:20px;text-align:right;top:570px">15</div><div class="lb" style="left:213px;top:570px">Route15</div><div class="in" style="left:260px;top:566px;width:51px">1</div>
<div class="lb" style="left:85px;top:596px">8</div><div class="lb" style="left:97px;top:596px">Route8</div><div class="in" style="left:138px;top:592px;width:51px">1</div>
<div class="lb" style="left:186px;width:20px;text-align:right;top:596px">16</div><div class="lb" style="left:213px;top:596px">Bottom</div><div class="in" style="left:260px;top:592px;width:51px">0</div>
<div class="lb" style="left:337px;top:414px">Via</div><div class="in" style="left:394px;top:410px;width:51px">99</div>
<div class="lb" style="left:337px;top:440px">NonPref</div><div class="in" style="left:394px;top:436px;width:51px">0</div>
<div class="lb" style="left:337px;top:466px">ChangeDir</div><div class="in" style="left:394px;top:462px;width:51px">25</div>
<div class="lb" style="left:337px;top:492px">OrthStep</div><div class="in" style="left:394px;top:488px;width:51px">2</div>
<div class="lb" style="left:337px;top:518px">DiagStep</div><div class="in" style="left:394px;top:514px;width:51px">3</div>
<div class="lb" style="left:337px;top:544px">ExtdStep</div><div class="in" style="left:394px;top:540px;width:51px">0</div>
<div class="lb" style="left:337px;top:570px">BonusStep</div><div class="in" style="left:394px;top:566px;width:51px">2</div>
<div class="lb" style="left:453px;top:414px">MalusStep</div><div class="in" style="left:513px;top:410px;width:51px">2</div>
<div class="lb" style="left:453px;top:440px">PadImpact</div><div class="in" style="left:513px;top:436px;width:51px">0</div>
<div class="lb" style="left:453px;top:466px">SmdImpact</div><div class="in" style="left:513px;top:462px;width:51px">0</div>
<div class="lb" style="left:453px;top:492px">BusImpact</div><div class="in" style="left:513px;top:488px;width:51px">0</div>
<div class="lb" style="left:453px;top:518px">Hugging</div><div class="in" style="left:513px;top:514px;width:51px">0</div>
<div class="lb" style="left:453px;top:544px">Polygon</div><div class="in" style="left:513px;top:540px;width:51px">10</div>
<div class="lb" style="left:591px;top:414px">Via</div><div class="in" style="left:647px;top:410px;width:85px">20</div>
<div class="lb" style="left:591px;top:440px">Segments</div><div class="in" style="left:647px;top:436px;width:85px">9999</div>
<div class="lb" style="left:591px;top:466px">ExtdSteps</div><div class="in" style="left:647px;top:462px;width:85px">1</div>
<div class="abs" style="left:583px;top:579px;width:13px;height:13px;border:1px solid #1c5180;background:linear-gradient(135deg,#dcdcd7,#fff)"><svg width="11" height="11" viewBox="0 0 11 11" style="position:absolute;left:0;top:0"><path d="M2 4.5 L4.5 7 L9 2.5" stroke="#21a121" stroke-width="2" fill="none"/></svg></div>
<div class="lb" style="left:602px;top:580px">Active</div>
<div class="btn" style="left:583px;top:602px">Add</div><div class="btn" style="left:666px;top:602px">Del</div>
<div class="btn def" style="left:513px;top:656px">OK</div><div class="btn" style="left:596px;top:656px">Select</div><div class="btn" style="left:679px;top:656px">Cancel</div>
<div id="taskbar">
<div class="abs" style="left:0;top:0;width:97px;height:30px;border-radius:0 12px 12px 0/0 15px 15px 0;background:linear-gradient(#3f8f3f 0,#5cb85c 8%,#3c9a3c 22%,#339533 55%,#2f8a2f 85%,#2a7a2a 100%);box-shadow:inset -3px 0 4px rgba(0,40,0,0.35), 2px 0 3px rgba(0,0,60,0.4)"></div>
<svg class="abs" style="left:11px;top:5px" width="20" height="20" viewBox="0 0 20 20"><path d="M2 3 C4 1.500 6 1.500 9 3 L8 9 C5.500 7.800 3.500 7.800 1 9z" fill="#e8562a"/><path d="M10 3.300 C12.500 4.500 15 4.500 18 3 L17 9 C14.500 10.300 12 10.300 9 9z" fill="#7cc242"/><path d="M0.800 10 C3.300 8.800 5.500 8.800 8 10 L7 16 C4.500 14.800 2.500 14.800 0 16z" fill="#4a90e0"/><path d="M9 10.200 C11.500 11.500 14 11.500 17 10 L16 16 C13.500 17.300 11 17.300 8 16z" fill="#f8c030"/></svg>
<div class="abs" style="left:34px;top:2px;font-size:18.500px;font-weight:bold;font-style:italic;color:#fff;text-shadow:1px 1px 1px #1a4a1a;letter-spacing:-0.400px;line-height:24px">start</div>
<div class="abs" style="left:109px;top:8px;font-size:9px;font-weight:bold;letter-spacing:-1px;background:#f4f4f4;border-radius:2px;padding:0 1px;line-height:11px"><span style="color:#d8202a">e</span><span style="color:#2040c0">b</span><span style="color:#e8b818">Y</span></div>
<svg class="abs" style="left:132px;top:6px" width="16" height="16" viewBox="0 0 16 16"><rect x="0.500" y="0.500" width="15" height="15" fill="#fdfdfd" stroke="#9ab0d8"/><path d="M2 13 C 6 11, 11 7, 14 2" stroke="#f09028" stroke-width="2" fill="none"/><path d="M2 10 C 6 9, 10 5, 12 2" stroke="#c8d8f0" stroke-width="1.500" fill="none"/></svg>
<svg class="abs" style="left:154px;top:5px" width="18" height="18" viewBox="0 0 18 18"><circle cx="9" cy="9.500" r="6" fill="none" stroke="#5ab0f0" stroke-width="3"/><path d="M3.500 9.500 h11" stroke="#5ab0f0" stroke-width="2.200"/><path d="M10 12 h6 v3 h-6z" fill="#2663d6"/><path d="M1 6 C 4 0, 14 0, 17 2" stroke="#e8c848" stroke-width="1.200" fill="none"/></svg>
<div class="abs" style="left:182px;top:0px;font-size:12px;color:#d0e0f8;font-weight:bold;letter-spacing:-1px">»</div>
<div class="abs" style="left:199px;top:4px;width:138px;height:23px;border-radius:3px;background:linear-gradient(#5a94ee 0,#3c7ee6 12%,#3876e0 60%,#3070dc 100%);box-shadow:inset 1px 1px 0 rgba(255,255,255,0.25), inset -1px -1px 0 rgba(0,0,60,0.25)"><svg class="abs" style="left:11px;top:4px" width="16" height="16" viewBox="0 0 16 16"><path d="M6 1 L14 2 L10 7 L13 8 L3 14 L6 9 L2 9z" fill="#e01828"/></svg><div class="abs" style="left:28px;top:4px;font-size:11px;color:#fff;white-space:nowrap;line-height:13px">Control Panel - E...</div></div>
<div class="abs" style="left:339px;top:4px;width:138px;height:23px;border-radius:3px;background:linear-gradient(#5a94ee 0,#3c7ee6 12%,#3876e0 60%,#3070dc 100%);box-shadow:inset 1px 1px 0 rgba(255,255,255,0.25), inset -1px -1px 0 rgba(0,0,60,0.25)"><svg class="abs" style="left:10px;top:4px" width="16" height="16" viewBox="0 0 16 16"><rect x="0.500" y="0.500" width="15" height="15" fill="#fff" stroke="#6a1010" stroke-width="1.400"/><path d="M3 5 h4 v-2 h4 M3 8 h10 M5 11 h3 v2 h4" stroke="#a01818" stroke-width="1.300" fill="none"/></svg><div class="abs" style="left:28px;top:4px;font-size:11px;color:#fff;white-space:nowrap;line-height:13px">2 Schematic - C:\...</div></div>
<div class="abs" style="left:478px;top:4px;width:140px;height:23px;border-radius:3px;background:linear-gradient(#1c49a8 0,#1e52b8 20%,#2058c0 100%);box-shadow:inset 1px 1px 2px rgba(0,0,40,0.5)"><svg class="abs" style="left:10px;top:4px" width="15" height="15" viewBox="0 0 14 14"><rect x="0" y="0" width="14" height="14" fill="#031a03"/><rect x="0" y="0" width="13" height="13" fill="#0c8c0c"/><rect x="4" y="2" width="6" height="4" fill="#e4e8e0"/><rect x="4" y="5.600" width="6.500" height="0.900" fill="#052805"/><rect x="5" y="1" width="1" height="1" fill="#d8ffd8"/><rect x="7" y="1" width="1" height="1" fill="#d8ffd8"/><rect x="9" y="1" width="1" height="1" fill="#d8ffd8"/><rect x="5" y="7" width="1" height="1" fill="#d8ffd8"/><rect x="7" y="7" width="1" height="1" fill="#d8ffd8"/><rect x="9" y="7" width="1" height="1" fill="#d8ffd8"/><rect x="1" y="2" width="1" height="1" fill="#b8ffb8"/><rect x="1" y="5" width="1" height="1" fill="#b8ffb8"/><rect x="1" y="8" width="1" height="1" fill="#b8ffb8"/><rect x="3" y="9" width="4" height="1" fill="#c8ff9c"/><rect x="3" y="11" width="4" height="1" fill="#c8ff9c"/><circle cx="11" cy="9" r="1" fill="#d02818"/><rect x="9" y="11" width="2" height="2" fill="#f0f078"/></svg><div class="abs" style="left:28px;top:4px;font-size:11px;color:#fff;white-space:nowrap;line-height:13px">1 Board - C:\Prog...</div></div>
<div class="abs" style="left:620px;top:4px;width:138px;height:23px;border-radius:3px;background:linear-gradient(#5a94ee 0,#3c7ee6 12%,#3876e0 60%,#3070dc 100%);box-shadow:inset 1px 1px 0 rgba(255,255,255,0.25), inset -1px -1px 0 rgba(0,0,60,0.25)"><svg class="abs" style="left:9px;top:4px" width="17" height="15" viewBox="0 0 17 15"><path d="M1 2.500 h5 l1.500 2 h8.500 v9.500 h-15z" fill="#f0d060" stroke="#a88820" stroke-width="0.800"/><path d="M1 6 h15 v8 h-15z" fill="#fbe88c" stroke="#a88820" stroke-width="0.800"/></svg><div class="abs" style="left:28px;top:4px;font-size:11px;color:#fff;white-space:nowrap;line-height:13px">Auto Route Eagle</div></div>
<div class="abs" style="left:760px;top:4px;width:138px;height:23px;border-radius:3px;background:linear-gradient(#5a94ee 0,#3c7ee6 12%,#3876e0 60%,#3070dc 100%);box-shadow:inset 1px 1px 0 rgba(255,255,255,0.25), inset -1px -1px 0 rgba(0,0,60,0.25)"><svg class="abs" style="left:10px;top:3px" width="16" height="18" viewBox="0 0 16 18"><path d="M3 8 h10 l-1 9 h-8z" fill="#d8c070" stroke="#806820" stroke-width="0.800"/><path d="M5 8 L3 1 M8 8 L8 0.500 M11 8 L13 1" stroke="#c83030" stroke-width="1.600"/><path d="M6.500 8 L6 2" stroke="#3060c0" stroke-width="1.400"/><path d="M9.500 8 L10.500 2" stroke="#30a030" stroke-width="1.400"/></svg><div class="abs" style="left:28px;top:4px;font-size:11px;color:#fff;white-space:nowrap;line-height:13px">Optimize3 - Paint</div></div>
<div class="abs" style="left:913px;top:0;width:111px;height:30px;background:linear-gradient(#1a8ae8 0,#3aa8f8 8%,#1594ec 20%,#128ee8 55%,#1896ee 85%,#0d70c8 100%);box-shadow:inset 1px 0 0 #0a50a8, inset 2px 0 0 #4ab8fa"></div>
<div class="abs" style="left:904px;top:7px;width:17px;height:17px;border-radius:9px;background:radial-gradient(circle at 40% 35%,#7ac8ff,#1a78e0 70%,#1260c0);box-shadow:0 0 0 1px rgba(255,255,255,0.5)"><svg width="17" height="17" viewBox="0 0 17 17" style="position:absolute;left:0;top:0"><path d="M10 4.500 L6 8.500 L10 12.500" stroke="#fff" stroke-width="2" fill="none"/></svg></div>
<svg class="abs" style="left:922px;top:6px" width="18" height="18" viewBox="0 0 18 18"><rect x="6" y="1" width="10" height="8" fill="#a8a0d0" stroke="#303048"/><rect x="7.500" y="2.500" width="7" height="5" fill="#2c2c58"/><rect x="1" y="6" width="10" height="8" fill="#a8a0d0" stroke="#303048"/><rect x="2.500" y="7.500" width="7" height="5" fill="#2c2c58"/><path d="M3 16 h7" stroke="#404858" stroke-width="1.500"/></svg>
<svg class="abs" style="left:941px;top:6px" width="17" height="17" viewBox="0 0 17 17"><rect x="0.500" y="0.500" width="16" height="16" rx="2" fill="#d81820" stroke="#fff" stroke-width="0.800"/><path d="M3 13 C 4 6, 8 3, 10.500 4 C 12.500 5, 12 9, 9 9.500 M 9 9.500 L 14 13.500" stroke="#fff" stroke-width="1.800" fill="none" stroke-linecap="round"/></svg>
<div class="abs" style="left:967px;top:8px;font-size:11px;color:#fff;white-space:nowrap;line-height:13px">8:01 PM</div>
</div>
</body></html>
